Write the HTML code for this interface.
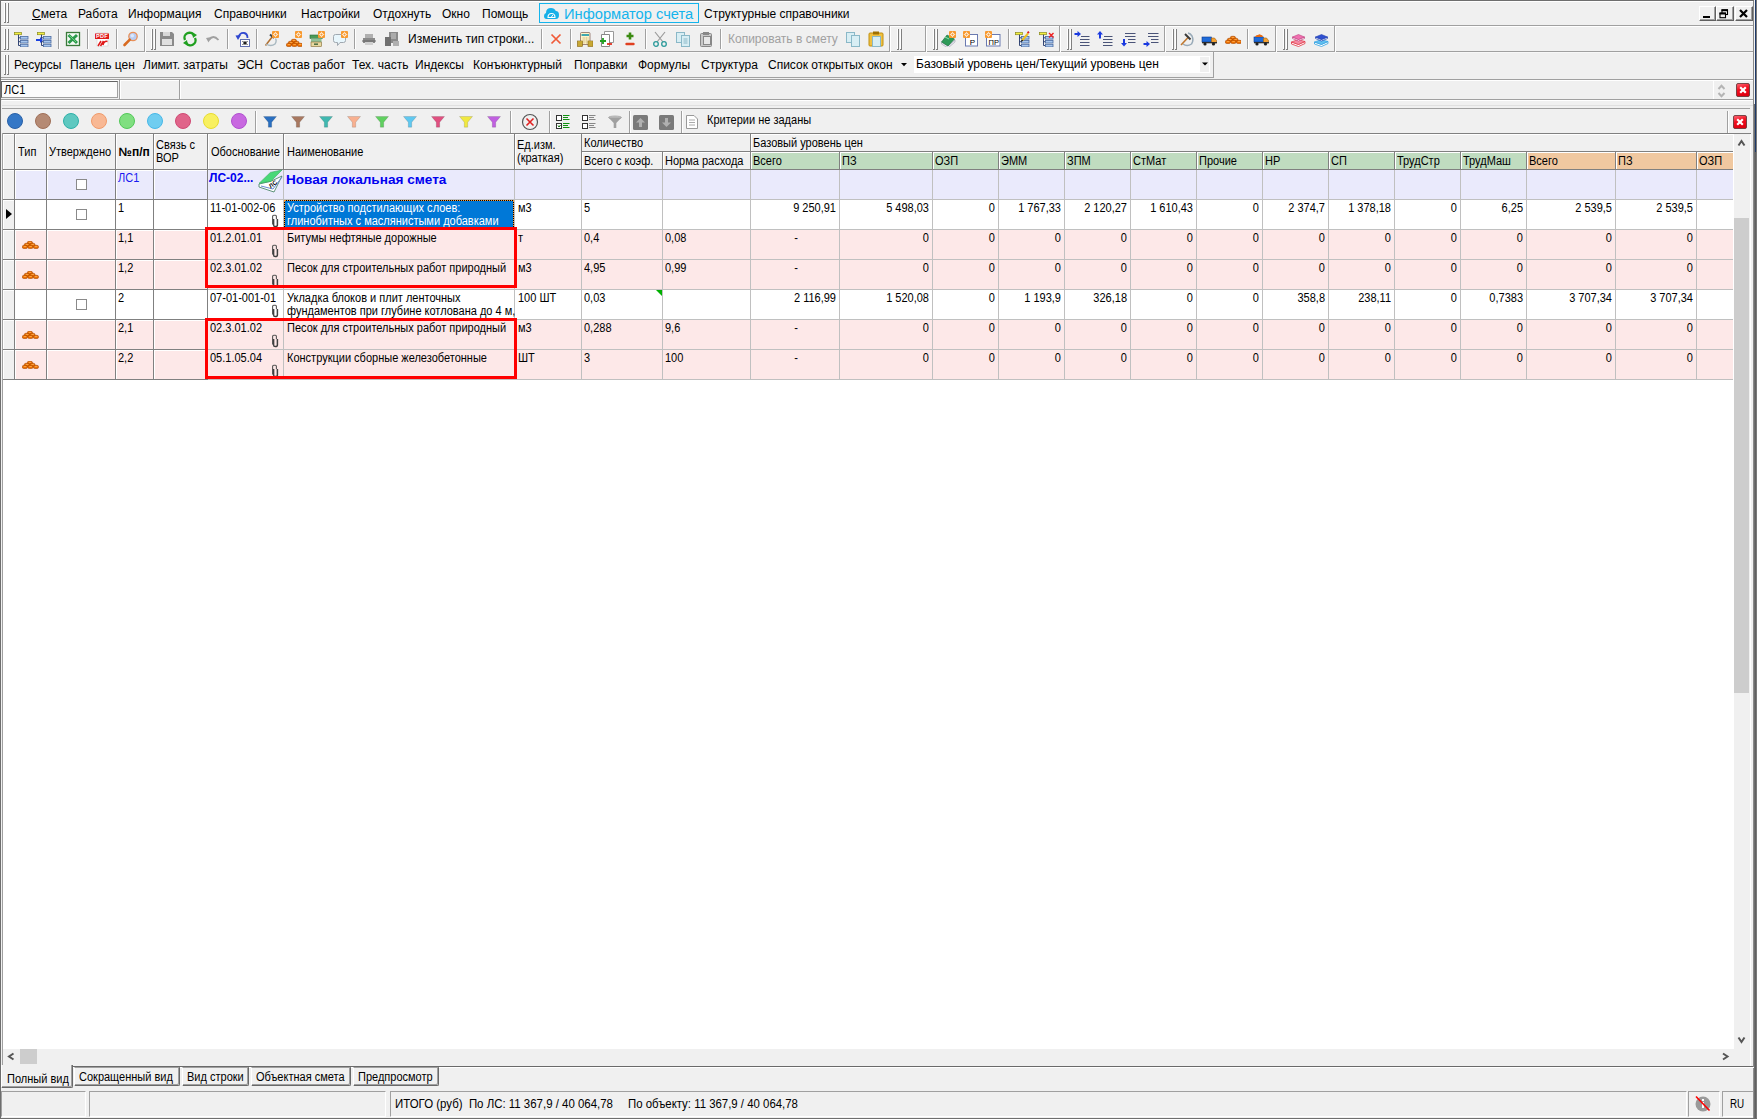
<!DOCTYPE html>
<html><head><meta charset="utf-8"><title>Smeta</title>
<style>
html,body{margin:0;padding:0;}
body{width:1757px;height:1119px;position:relative;overflow:hidden;background:#f0f0f0;font-family:"Liberation Sans",sans-serif;}
body>div,body>svg{position:absolute;white-space:pre;}
</style></head><body>
<div style="left:4px;top:3px;width:1px;height:20px;background:#ffffff;"></div>
<div style="left:5px;top:3px;width:1px;height:20px;background:#808080;"></div>
<div style="left:4px;top:22px;width:2px;height:1px;background:#808080;"></div>
<div style="left:7px;top:3px;width:1px;height:20px;background:#ffffff;"></div>
<div style="left:8px;top:3px;width:1px;height:20px;background:#808080;"></div>
<div style="left:7px;top:22px;width:2px;height:1px;background:#808080;"></div>
<div style="left:32px;top:8.03px;font-size:12px;line-height:12px;color:#000;">Смета</div>
<div style="left:78px;top:8.03px;font-size:12px;line-height:12px;color:#000;">Работа</div>
<div style="left:128px;top:8.03px;font-size:12px;line-height:12px;color:#000;">Информация</div>
<div style="left:214px;top:8.03px;font-size:12px;line-height:12px;color:#000;">Справочники</div>
<div style="left:301px;top:8.03px;font-size:12px;line-height:12px;color:#000;">Настройки</div>
<div style="left:373px;top:8.03px;font-size:12px;line-height:12px;color:#000;">Отдохнуть</div>
<div style="left:442px;top:8.03px;font-size:12px;line-height:12px;color:#000;">Окно</div>
<div style="left:482px;top:8.03px;font-size:12px;line-height:12px;color:#000;">Помощь</div>
<div style="left:32px;top:19px;width:9px;height:1px;background:#000;"></div>
<div style="left:539px;top:3px;width:160px;height:20px;background:transparent;box-sizing:border-box;border:1px solid #14b4ec;"></div>
<svg style="left:543px;top:6px;" width="17" height="14" viewBox="0 0 17 14"><path d="M3.5 13 Q1 13 1 10 Q1 7.5 3 7 Q3 2 8 2 Q11.5 2 12.8 5 Q16 5.2 16 9 Q16 13 13 13 Z" fill="#18b0e8"/><path d="M5 11.5 Q5 7.5 8.5 7.5 Q12 7.5 12 11.5 Z" fill="none" stroke="#fff" stroke-width="1.1"/><path d="M8.5 11 L9.8 9" stroke="#fff" stroke-width="1"/></svg>
<div style="left:564px;top:6.79px;font-size:14.7px;line-height:14.7px;color:#14b4ec;">Информатор счета</div>
<div style="left:704px;top:8.03px;font-size:12px;line-height:12px;color:#000;">Структурные справочники</div>
<div style="left:1699px;top:6px;width:17px;height:15px;background:#f0f0f0;box-sizing:border-box;border-top:1px solid #fff;border-left:1px solid #fff;border-right:1px solid #606060;border-bottom:1px solid #606060;box-shadow:inset -1px -1px 0 #a0a0a0;"></div>
<div style="left:1716px;top:6px;width:18px;height:15px;background:#f0f0f0;box-sizing:border-box;border-top:1px solid #fff;border-left:1px solid #fff;border-right:1px solid #606060;border-bottom:1px solid #606060;box-shadow:inset -1px -1px 0 #a0a0a0;"></div>
<div style="left:1735px;top:6px;width:18px;height:15px;background:#f0f0f0;box-sizing:border-box;border-top:1px solid #fff;border-left:1px solid #fff;border-right:1px solid #606060;border-bottom:1px solid #606060;box-shadow:inset -1px -1px 0 #a0a0a0;"></div>
<div style="left:1703px;top:16px;width:7px;height:2px;background:#000;"></div>
<svg style="left:1718px;top:8px;" width="12" height="11" viewBox="0 0 12 11"><rect x="4" y="2" width="5.5" height="4.5" fill="none" stroke="#000" stroke-width="1.1"/><rect x="3.5" y="1.2" width="6.5" height="2" fill="#000"/><rect x="2" y="5.2" width="5.5" height="4.5" fill="#f0f0f0" stroke="#000" stroke-width="1.1"/><rect x="1.5" y="4.5" width="6.5" height="2" fill="#000"/></svg>
<svg style="left:1738px;top:8px;" width="11" height="11" viewBox="0 0 11 11"><path d="M2 2 L9 9 M9 2 L2 9" stroke="#000" stroke-width="2.2"/></svg>
<div style="left:1px;top:25px;width:1753px;height:1px;background:#a0a0a0;"></div>
<div style="left:1px;top:26px;width:1752px;height:1px;background:#ffffff;"></div>
<div style="left:1px;top:1px;width:1752px;height:1px;background:#ffffff;"></div>
<div style="left:1753px;top:1px;width:1px;height:25px;background:#a0a0a0;"></div>
<div style="left:1px;top:51px;width:1753px;height:1px;background:#a0a0a0;"></div>
<div style="left:1px;top:52px;width:1753px;height:1px;background:#f8f8f8;"></div>
<div style="left:144px;top:26px;width:1px;height:26px;background:#a0a0a0;"></div>
<div style="left:145px;top:26px;width:1px;height:26px;background:#ffffff;"></div>
<div style="left:889px;top:26px;width:1px;height:26px;background:#a0a0a0;"></div>
<div style="left:890px;top:26px;width:1px;height:26px;background:#ffffff;"></div>
<div style="left:925px;top:26px;width:1px;height:26px;background:#a0a0a0;"></div>
<div style="left:926px;top:26px;width:1px;height:26px;background:#ffffff;"></div>
<div style="left:1059px;top:26px;width:1px;height:26px;background:#a0a0a0;"></div>
<div style="left:1060px;top:26px;width:1px;height:26px;background:#ffffff;"></div>
<div style="left:1164px;top:26px;width:1px;height:26px;background:#a0a0a0;"></div>
<div style="left:1165px;top:26px;width:1px;height:26px;background:#ffffff;"></div>
<div style="left:1275px;top:26px;width:1px;height:26px;background:#a0a0a0;"></div>
<div style="left:1276px;top:26px;width:1px;height:26px;background:#ffffff;"></div>
<div style="left:1334px;top:26px;width:1px;height:26px;background:#a0a0a0;"></div>
<div style="left:1335px;top:26px;width:1px;height:26px;background:#ffffff;"></div>
<div style="left:4px;top:29px;width:1px;height:21px;background:#ffffff;"></div>
<div style="left:5px;top:29px;width:1px;height:21px;background:#808080;"></div>
<div style="left:4px;top:49px;width:2px;height:1px;background:#808080;"></div>
<div style="left:7px;top:29px;width:1px;height:21px;background:#ffffff;"></div>
<div style="left:8px;top:29px;width:1px;height:21px;background:#808080;"></div>
<div style="left:7px;top:49px;width:2px;height:1px;background:#808080;"></div>
<div style="left:151px;top:29px;width:1px;height:21px;background:#ffffff;"></div>
<div style="left:152px;top:29px;width:1px;height:21px;background:#808080;"></div>
<div style="left:151px;top:49px;width:2px;height:1px;background:#808080;"></div>
<div style="left:154px;top:29px;width:1px;height:21px;background:#ffffff;"></div>
<div style="left:155px;top:29px;width:1px;height:21px;background:#808080;"></div>
<div style="left:154px;top:49px;width:2px;height:1px;background:#808080;"></div>
<div style="left:897px;top:29px;width:1px;height:21px;background:#ffffff;"></div>
<div style="left:898px;top:29px;width:1px;height:21px;background:#808080;"></div>
<div style="left:897px;top:49px;width:2px;height:1px;background:#808080;"></div>
<div style="left:900px;top:29px;width:1px;height:21px;background:#ffffff;"></div>
<div style="left:901px;top:29px;width:1px;height:21px;background:#808080;"></div>
<div style="left:900px;top:49px;width:2px;height:1px;background:#808080;"></div>
<div style="left:933px;top:29px;width:1px;height:21px;background:#ffffff;"></div>
<div style="left:934px;top:29px;width:1px;height:21px;background:#808080;"></div>
<div style="left:933px;top:49px;width:2px;height:1px;background:#808080;"></div>
<div style="left:936px;top:29px;width:1px;height:21px;background:#ffffff;"></div>
<div style="left:937px;top:29px;width:1px;height:21px;background:#808080;"></div>
<div style="left:936px;top:49px;width:2px;height:1px;background:#808080;"></div>
<div style="left:1067px;top:29px;width:1px;height:21px;background:#ffffff;"></div>
<div style="left:1068px;top:29px;width:1px;height:21px;background:#808080;"></div>
<div style="left:1067px;top:49px;width:2px;height:1px;background:#808080;"></div>
<div style="left:1070px;top:29px;width:1px;height:21px;background:#ffffff;"></div>
<div style="left:1071px;top:29px;width:1px;height:21px;background:#808080;"></div>
<div style="left:1070px;top:49px;width:2px;height:1px;background:#808080;"></div>
<div style="left:1172px;top:29px;width:1px;height:21px;background:#ffffff;"></div>
<div style="left:1173px;top:29px;width:1px;height:21px;background:#808080;"></div>
<div style="left:1172px;top:49px;width:2px;height:1px;background:#808080;"></div>
<div style="left:1175px;top:29px;width:1px;height:21px;background:#ffffff;"></div>
<div style="left:1176px;top:29px;width:1px;height:21px;background:#808080;"></div>
<div style="left:1175px;top:49px;width:2px;height:1px;background:#808080;"></div>
<div style="left:1283px;top:29px;width:1px;height:21px;background:#ffffff;"></div>
<div style="left:1284px;top:29px;width:1px;height:21px;background:#808080;"></div>
<div style="left:1283px;top:49px;width:2px;height:1px;background:#808080;"></div>
<div style="left:1286px;top:29px;width:1px;height:21px;background:#ffffff;"></div>
<div style="left:1287px;top:29px;width:1px;height:21px;background:#808080;"></div>
<div style="left:1286px;top:49px;width:2px;height:1px;background:#808080;"></div>
<div style="left:58px;top:29px;width:1px;height:20px;background:#a0a0a0;"></div>
<div style="left:59px;top:29px;width:1px;height:20px;background:#ffffff;"></div>
<div style="left:87px;top:29px;width:1px;height:20px;background:#a0a0a0;"></div>
<div style="left:88px;top:29px;width:1px;height:20px;background:#ffffff;"></div>
<div style="left:116px;top:29px;width:1px;height:20px;background:#a0a0a0;"></div>
<div style="left:117px;top:29px;width:1px;height:20px;background:#ffffff;"></div>
<div style="left:227px;top:29px;width:1px;height:20px;background:#a0a0a0;"></div>
<div style="left:228px;top:29px;width:1px;height:20px;background:#ffffff;"></div>
<div style="left:256px;top:29px;width:1px;height:20px;background:#a0a0a0;"></div>
<div style="left:257px;top:29px;width:1px;height:20px;background:#ffffff;"></div>
<div style="left:354px;top:29px;width:1px;height:20px;background:#a0a0a0;"></div>
<div style="left:355px;top:29px;width:1px;height:20px;background:#ffffff;"></div>
<div style="left:541px;top:29px;width:1px;height:20px;background:#a0a0a0;"></div>
<div style="left:542px;top:29px;width:1px;height:20px;background:#ffffff;"></div>
<div style="left:570px;top:29px;width:1px;height:20px;background:#a0a0a0;"></div>
<div style="left:571px;top:29px;width:1px;height:20px;background:#ffffff;"></div>
<div style="left:645px;top:29px;width:1px;height:20px;background:#a0a0a0;"></div>
<div style="left:646px;top:29px;width:1px;height:20px;background:#ffffff;"></div>
<div style="left:720px;top:29px;width:1px;height:20px;background:#a0a0a0;"></div>
<div style="left:721px;top:29px;width:1px;height:20px;background:#ffffff;"></div>
<div style="left:1008px;top:29px;width:1px;height:20px;background:#a0a0a0;"></div>
<div style="left:1009px;top:29px;width:1px;height:20px;background:#ffffff;"></div>
<div style="left:1247px;top:29px;width:1px;height:20px;background:#a0a0a0;"></div>
<div style="left:1248px;top:29px;width:1px;height:20px;background:#ffffff;"></div>
<svg style="left:13px;top:31px;" width="16" height="16" viewBox="0 0 16 16"><rect x="1.5" y="1.5" width="7" height="2.2" fill="#f4f040" stroke="#8a8a20" stroke-width="0.7"/><path d="M5.5 3.7 V14.5 M5.5 6.8 H7.5 M5.5 10.7 H7.5 M5.5 14.5 H7.5" stroke="#203468" fill="none" stroke-width="0.9"/><rect x="7.5" y="5.5" width="7.5" height="2.6" fill="#a8c8f0" stroke="#4a6aa0" stroke-width="0.8"/><rect x="7.5" y="9.4" width="7.5" height="2.6" fill="#a8c8f0" stroke="#4a6aa0" stroke-width="0.8"/><rect x="7.5" y="13.3" width="7.5" height="2.6" fill="#a8c8f0" stroke="#4a6aa0" stroke-width="0.8"/></svg>
<svg style="left:36px;top:31px;" width="16" height="16" viewBox="0 0 16 16"><rect x="1.5" y="1.5" width="7" height="2.2" fill="#f4f040" stroke="#8a8a20" stroke-width="0.7"/><path d="M5.5 3.7 V14.5 M5.5 6.8 H7.5 M5.5 10.7 H7.5 M5.5 14.5 H7.5" stroke="#203468" fill="none" stroke-width="0.9"/><rect x="7.5" y="5.5" width="7.5" height="2.6" fill="#a8c8f0" stroke="#4a6aa0" stroke-width="0.8"/><rect x="7.5" y="9.4" width="7.5" height="2.6" fill="#a8c8f0" stroke="#4a6aa0" stroke-width="0.8"/><rect x="7.5" y="13.3" width="7.5" height="2.6" fill="#a8c8f0" stroke="#4a6aa0" stroke-width="0.8"/><path d="M0 9 H5" stroke="#1a40e0" stroke-width="2"/><path d="M4 6 L7 9 L4 12 Z" fill="#1a40e0"/></svg>
<svg style="left:65px;top:31px;" width="16" height="16" viewBox="0 0 16 16"><rect x="1.5" y="1.5" width="13" height="13" fill="#f4faf4" stroke="#3a7a3a" stroke-width="1.3"/><path d="M3.5 4 L12 12 M12 4 L3.5 12" stroke="#2a9a4a" stroke-width="3"/><path d="M4.5 4.5 L11 11" stroke="#70d080" stroke-width="1"/></svg>
<svg style="left:94px;top:31px;" width="16" height="16" viewBox="0 0 16 16"><rect x="3" y="2" width="11" height="13" fill="#fff" stroke="#d0d0d0" stroke-width="0.6"/><rect x="1" y="2.5" width="14" height="5.5" fill="#e01818"/><text x="8" y="7.2" font-size="5.5" font-weight="bold" fill="#fff" text-anchor="middle" font-family="Liberation Sans" letter-spacing="0.3">PDF</text><path d="M4 15 L7 10 M6.5 15 L9.5 10 M9 14 Q10 9.5 13.5 10.5" stroke="#e01818" stroke-width="1.5" fill="none"/></svg>
<svg style="left:122px;top:31px;" width="16" height="16" viewBox="0 0 16 16"><circle cx="11" cy="5.5" r="4.2" fill="#b8cdf4" stroke="#e8905a" stroke-width="1.3"/><circle cx="10.3" cy="4.8" r="1.8" fill="#dce8fc"/><path d="M7.8 8.7 L2.5 14" stroke="#d86a20" stroke-width="2.6" stroke-linecap="round"/></svg>
<svg style="left:159px;top:31px;" width="16" height="16" viewBox="0 0 16 16"><path d="M1 1 H13 L15 3 V15 H1 Z" fill="#8a8a8a"/><rect x="4" y="1" width="7" height="4" fill="#d8d8d8"/><rect x="3" y="8" width="10" height="6" fill="#e0e0e0"/></svg>
<svg style="left:182px;top:31px;" width="16" height="16" viewBox="0 0 16 16"><path d="M3 9 A5 5 0 0 1 12 4.5" stroke="#20a020" stroke-width="2.4" fill="none"/><path d="M13 7 A5 5 0 0 1 4 11.5" stroke="#20a020" stroke-width="2.4" fill="none"/><path d="M10 1 L15 4 L11 7 Z" fill="#20a020"/><path d="M6 15 L1 12 L5 9 Z" fill="#20a020"/></svg>
<svg style="left:205px;top:31px;" width="16" height="16" viewBox="0 0 16 16"><path d="M4 9 Q8 3 13.5 9" stroke="#a0a0a0" stroke-width="1.8" fill="none"/><path d="M1 7 L6.5 6 L3.5 11.5 Z" fill="#a0a0a0"/></svg>
<svg style="left:235px;top:31px;" width="16" height="16" viewBox="0 0 16 16"><path d="M3.5 6 Q5 1.5 9 2 Q12.5 2.5 12.5 7" stroke="#3048d0" stroke-width="1.8" fill="none"/><path d="M0.5 4.5 L6 4 L3 9 Z" fill="#3048d0"/><rect x="5.5" y="8.5" width="9" height="7" fill="#fff" stroke="#6070b0"/><path d="M7.5 10.5 L12.5 13.5 M12.5 10.5 L7.5 13.5 M10 10 V14" stroke="#000" stroke-width="0.9"/></svg>
<svg style="left:263px;top:31px;" width="16" height="16" viewBox="0 0 16 16"><path d="M2.5 14.5 L9.5 5.5" stroke="#b07030" stroke-width="1.5"/><path d="M7 3.5 L11 7" stroke="#404850" stroke-width="2"/><path d="M3 13 Q8 16 12 13 Q14 10 12.5 7.5" stroke="#a8b8c0" stroke-width="1.4" fill="none"/><rect x="9" y="0" width="7" height="7" rx="1" fill="#f89a30"/><circle cx="12.5" cy="3.5" r="1.5" fill="none" stroke="#fff" stroke-width="1"/><path d="M12.5 0.8 V1.6 M12.5 5.4 V6.2 M9.8 3.5 H10.6 M14.4 3.5 H15.2" stroke="#fff" stroke-width="0.8"/></svg>
<svg style="left:286px;top:31px;" width="16" height="16" viewBox="0 0 16 16"><rect x="5.3" y="8.3" width="5.2" height="3.2" rx="1.5" fill="#ee7000" stroke="#a84800" stroke-width="0.6"/><rect x="6.8" y="9.2" width="2.5" height="0.8" fill="#ffb050"/><rect x="2.3" y="10.3" width="5.2" height="3.2" rx="1.5" fill="#ee7000" stroke="#a84800" stroke-width="0.6"/><rect x="3.8" y="11.2" width="2.5" height="0.8" fill="#ffb050"/><rect x="7.8" y="10.3" width="5.2" height="3.2" rx="1.5" fill="#ee7000" stroke="#a84800" stroke-width="0.6"/><rect x="9.3" y="11.2" width="2.5" height="0.8" fill="#ffb050"/><rect x="0.3" y="12.3" width="5.2" height="3.2" rx="1.5" fill="#ee7000" stroke="#a84800" stroke-width="0.6"/><rect x="1.8" y="13.2" width="2.5" height="0.8" fill="#ffb050"/><rect x="5.8" y="12.3" width="5.2" height="3.2" rx="1.5" fill="#ee7000" stroke="#a84800" stroke-width="0.6"/><rect x="7.3" y="13.2" width="2.5" height="0.8" fill="#ffb050"/><rect x="11.3" y="12.3" width="5.2" height="3.2" rx="1.5" fill="#ee7000" stroke="#a84800" stroke-width="0.6"/><rect x="12.8" y="13.2" width="2.5" height="0.8" fill="#ffb050"/><rect x="9" y="0" width="7" height="7" rx="1" fill="#f89a30"/><circle cx="12.5" cy="3.5" r="1.5" fill="none" stroke="#fff" stroke-width="1"/><path d="M12.5 0.8 V1.6 M12.5 5.4 V6.2 M9.8 3.5 H10.6 M14.4 3.5 H15.2" stroke="#fff" stroke-width="0.8"/></svg>
<svg style="left:309px;top:31px;" width="16" height="16" viewBox="0 0 16 16"><rect x="1" y="4" width="12.5" height="3.5" fill="#4a9a58" stroke="#2a6a38" stroke-width="0.6"/><rect x="2" y="7.5" width="10.5" height="3.5" fill="#90c098"/><rect x="2" y="11" width="10.5" height="4.5" fill="#e8d8a0" stroke="#806830" stroke-width="0.6"/><rect x="5" y="12.5" width="4" height="1.3" fill="#305830"/><rect x="9" y="0" width="7" height="7" rx="1" fill="#f89a30"/><circle cx="12.5" cy="3.5" r="1.5" fill="none" stroke="#fff" stroke-width="1"/><path d="M12.5 0.8 V1.6 M12.5 5.4 V6.2 M9.8 3.5 H10.6 M14.4 3.5 H15.2" stroke="#fff" stroke-width="0.8"/></svg>
<svg style="left:332px;top:31px;" width="16" height="16" viewBox="0 0 16 16"><path d="M1.5 5.5 Q1.5 3.5 3.5 3.5 H11.5 Q13.5 3.5 13.5 5.5 V9.5 Q13.5 11.5 11.5 11.5 H8 L5.5 14.5 V11.5 H3.5 Q1.5 11.5 1.5 9.5 Z" fill="#e8f6fc" stroke="#a0a8b0"/><rect x="9" y="0" width="7" height="7" rx="1" fill="#f89a30"/><circle cx="12.5" cy="3.5" r="1.5" fill="none" stroke="#fff" stroke-width="1"/><path d="M12.5 0.8 V1.6 M12.5 5.4 V6.2 M9.8 3.5 H10.6 M14.4 3.5 H15.2" stroke="#fff" stroke-width="0.8"/></svg>
<svg style="left:361px;top:31px;" width="16" height="16" viewBox="0 0 16 16"><path d="M2 7 H14 V12 H2 Z" fill="#8a8a8a"/><path d="M4 3 H12 V7 H4 Z" fill="#b0b0b0"/><path d="M1 10 H15" stroke="#666"/><rect x="4" y="11" width="8" height="3" fill="#d0d0d0"/></svg>
<svg style="left:384px;top:31px;" width="16" height="16" viewBox="0 0 16 16"><rect x="5" y="1" width="9" height="11" fill="#8a8a8a"/><rect x="1" y="6" width="6" height="9" fill="#707070"/><rect x="9" y="10" width="6" height="5" fill="#b0b0b0"/><path d="M7 3 H12 M7 5 H12 M7 7 H12" stroke="#ccc"/></svg>
<svg style="left:548px;top:31px;" width="16" height="16" viewBox="0 0 16 16"><path d="M3.5 3.5 L12.5 12.5 M12.5 3.5 L3.5 12.5" stroke="#f05a38" stroke-width="1.7"/></svg>
<svg style="left:577px;top:31px;" width="16" height="16" viewBox="0 0 16 16"><rect x="3.5" y="1.5" width="9.5" height="12" rx="1" fill="#fff4c8" stroke="#8a6a60" stroke-width="0.8"/><rect x="4.5" y="3" width="7.5" height="2" fill="#40a8b0"/><path d="M5 7 H12 M5 9 H12 M5 11 H12 M7 6 V13 M9.5 6 V13" stroke="#d8c890" stroke-width="0.6"/><rect x="0.5" y="10" width="5" height="5.5" fill="#e0c040" stroke="#806010" stroke-width="0.6"/><rect x="11" y="10" width="5" height="5.5" fill="#e0c040" stroke="#806010" stroke-width="0.6"/><path d="M0.5 12 H5.5 M0.5 14 H5.5 M11 12 H16 M11 14 H16" stroke="#806010" stroke-width="0.5"/></svg>
<svg style="left:599px;top:31px;" width="16" height="16" viewBox="0 0 16 16"><path d="M5.5 0.5 H14.5 V11.5 H5.5 Z" fill="#fff" stroke="#999"/><path d="M2.5 3.5 H10.5 V15.5 H2.5 Z" fill="#fff" stroke="#888"/><path d="M1 10 H7 M4 7 V13" stroke="#20a020" stroke-width="1.8"/><path d="M8 13 H13" stroke="#e03020" stroke-width="1.8"/></svg>
<svg style="left:622px;top:31px;" width="16" height="16" viewBox="0 0 16 16"><path d="M4.5 5 H11.5 M8 1.5 V8.5" stroke="#3a8a10" stroke-width="2.6"/><path d="M4.5 13 H11.5" stroke="#e04020" stroke-width="2.4" stroke-linecap="round"/></svg>
<svg style="left:652px;top:31px;" width="16" height="16" viewBox="0 0 16 16"><path d="M3 1 L11 11 M13 1 L5 11" stroke="#9a9a9a" stroke-width="1.2"/><circle cx="4" cy="13" r="2.3" fill="none" stroke="#2a9a9a" stroke-width="1.3"/><circle cx="12" cy="13" r="2.3" fill="none" stroke="#2a9a9a" stroke-width="1.3"/></svg>
<svg style="left:675px;top:31px;" width="16" height="16" viewBox="0 0 16 16"><rect x="1.5" y="1.5" width="8" height="10" fill="#d8eef4" stroke="#8ab8c8"/><rect x="6.5" y="4.5" width="8" height="11" fill="#d8eef4" stroke="#8ab8c8"/><path d="M8.5 8 H12.5 M8.5 10 H12.5 M8.5 12 H12.5" stroke="#8ab8c8"/></svg>
<svg style="left:698px;top:31px;" width="16" height="16" viewBox="0 0 16 16"><rect x="2.5" y="2.5" width="11" height="13" rx="1" fill="#c8c8c8" stroke="#888"/><rect x="5" y="1" width="6" height="3" fill="#888"/><rect x="5.5" y="5.5" width="7" height="8" fill="#e8e8e8" stroke="#888"/></svg>
<svg style="left:845px;top:31px;" width="16" height="16" viewBox="0 0 16 16"><rect x="1.5" y="1.5" width="8" height="10" fill="#d8eef4" stroke="#8ab8c8"/><rect x="6.5" y="4.5" width="8" height="11" fill="#d8eef4" stroke="#8ab8c8"/></svg>
<svg style="left:868px;top:31px;" width="16" height="16" viewBox="0 0 16 16"><rect x="1" y="2" width="14" height="13" rx="1" fill="#f0c040" stroke="#c09010"/><rect x="5" y="0.5" width="6" height="3" fill="#a07000"/><rect x="4.5" y="5.5" width="8" height="10" fill="#d8eef4" stroke="#8ab8c8"/></svg>
<svg style="left:940px;top:31px;" width="16" height="16" viewBox="0 0 16 16"><path d="M1.5 11 L8 15 L15 9 L15 11 L8 17 L1.5 13 Z" fill="#e8e8f0" stroke="#a0a0b0" stroke-width="0.6"/><path d="M1.5 11 L7 4 L14.5 8 L8 15 Z" fill="#2e9a58" stroke="#1a6a3a" stroke-width="0.6"/><path d="M5 6 L9 8" stroke="#90e0b0" stroke-width="1"/><rect x="9" y="0" width="7" height="7" rx="1" fill="#f89a30"/><circle cx="12.5" cy="3.5" r="1.5" fill="none" stroke="#fff" stroke-width="1"/><path d="M12.5 0.8 V1.6 M12.5 5.4 V6.2 M9.8 3.5 H10.6 M14.4 3.5 H15.2" stroke="#fff" stroke-width="0.8"/></svg>
<svg style="left:963px;top:31px;" width="16" height="16" viewBox="0 0 16 16"><rect x="2.5" y="3.5" width="12" height="11.5" fill="#fff" stroke="#6a7ab0"/><text x="9.5" y="13.5" font-size="8" fill="#000" text-anchor="middle" font-family="Liberation Sans">Р</text><rect x="0" y="0" width="7" height="7" rx="1" fill="#f89a30"/><circle cx="3.5" cy="3.5" r="1.5" fill="none" stroke="#fff" stroke-width="1"/><path d="M3.5 0.8 V1.6 M3.5 5.4 V6.2 M0.8 3.5 H1.6 M5.4 3.5 H6.2" stroke="#fff" stroke-width="0.8"/></svg>
<svg style="left:985px;top:31px;" width="16" height="16" viewBox="0 0 16 16"><rect x="1.5" y="3.5" width="13.5" height="11.5" fill="#fff" stroke="#6a7ab0"/><text x="8.8" y="13.5" font-size="7.5" fill="#000" text-anchor="middle" font-family="Liberation Sans">ПР</text><rect x="0" y="0" width="7" height="7" rx="1" fill="#f89a30"/><circle cx="3.5" cy="3.5" r="1.5" fill="none" stroke="#fff" stroke-width="1"/><path d="M3.5 0.8 V1.6 M3.5 5.4 V6.2 M0.8 3.5 H1.6 M5.4 3.5 H6.2" stroke="#fff" stroke-width="0.8"/></svg>
<svg style="left:1014px;top:31px;" width="16" height="16" viewBox="0 0 16 16"><rect x="1.5" y="1.5" width="7" height="2.2" fill="#f4f040" stroke="#8a8a20" stroke-width="0.7"/><path d="M5.5 3.7 V14.5 M5.5 6.8 H7.5 M5.5 10.7 H7.5 M5.5 14.5 H7.5" stroke="#203468" fill="none" stroke-width="0.9"/><rect x="7.5" y="5.5" width="7.5" height="2.6" fill="#a8c8f0" stroke="#4a6aa0" stroke-width="0.8"/><rect x="7.5" y="9.4" width="7.5" height="2.6" fill="#a8c8f0" stroke="#4a6aa0" stroke-width="0.8"/><rect x="7.5" y="13.3" width="7.5" height="2.6" fill="#a8c8f0" stroke="#4a6aa0" stroke-width="0.8"/><path d="M8 9.5 L14 2.5" stroke="#f0c020" stroke-width="2"/><path d="M13.5 2 L15 0.8" stroke="#e02020" stroke-width="2"/><path d="M7.5 10.5 L8.5 9" stroke="#000" stroke-width="1.2"/></svg>
<svg style="left:1038px;top:31px;" width="16" height="16" viewBox="0 0 16 16"><rect x="1.5" y="1.5" width="7" height="2.2" fill="#f4f040" stroke="#8a8a20" stroke-width="0.7"/><path d="M5.5 3.7 V14.5 M5.5 6.8 H7.5 M5.5 10.7 H7.5 M5.5 14.5 H7.5" stroke="#203468" fill="none" stroke-width="0.9"/><rect x="7.5" y="5.5" width="7.5" height="2.6" fill="#a8c8f0" stroke="#4a6aa0" stroke-width="0.8"/><rect x="7.5" y="9.4" width="7.5" height="2.6" fill="#a8c8f0" stroke="#4a6aa0" stroke-width="0.8"/><rect x="7.5" y="13.3" width="7.5" height="2.6" fill="#a8c8f0" stroke="#4a6aa0" stroke-width="0.8"/><path d="M11 2 L15.5 6.5 M15.5 2 L11 6.5" stroke="#f02020" stroke-width="1.4"/></svg>
<svg style="left:1074px;top:31px;" width="16" height="16" viewBox="0 0 16 16"><path d="M7 5.5 H15.5 M6 8.5 H15.5 M6 11.5 H15.5 M6 14.5 H15.5" stroke="#4a5478" stroke-width="1"/><path d="M0.5 3 H4" stroke="#1a3ae0" stroke-width="2"/><path d="M3.5 0 L7 3 L3.5 6 Z" fill="#1a3ae0"/></svg>
<svg style="left:1097px;top:31px;" width="16" height="16" viewBox="0 0 16 16"><path d="M7 5.5 H15.5 M6 8.5 H15.5 M6 11.5 H15.5 M6 14.5 H15.5" stroke="#4a5478" stroke-width="1"/><path d="M3 3 V7.5" stroke="#1a3ae0" stroke-width="2"/><path d="M0 3.5 L3 0 L6 3.5 Z" fill="#1a3ae0"/></svg>
<svg style="left:1120px;top:31px;" width="16" height="16" viewBox="0 0 16 16"><path d="M5 2.5 H15.5 M5 5.5 H15.5 M8 8.5 H15.5 M8 11.5 H15.5" stroke="#4a5478" stroke-width="1"/><path d="M4 8 V12.5" stroke="#1a3ae0" stroke-width="2"/><path d="M1 12 L4 15.5 L7 12 Z" fill="#1a3ae0"/></svg>
<svg style="left:1143px;top:31px;" width="16" height="16" viewBox="0 0 16 16"><path d="M5 2.5 H15.5 M5 5.5 H15.5 M8 8.5 H15.5 M8 11.5 H15.5" stroke="#4a5478" stroke-width="1"/><path d="M0.5 13 H4" stroke="#1a3ae0" stroke-width="2"/><path d="M3.5 10 L7 13 L3.5 16 Z" fill="#1a3ae0"/></svg>
<svg style="left:1179px;top:31px;" width="16" height="16" viewBox="0 0 16 16"><path d="M4 13 Q8 16 12.5 13 Q15 9.5 13 5 Q11.5 2.5 9 2" stroke="#98aab8" stroke-width="1.5" fill="none"/><path d="M2 14 L9.5 6" stroke="#c07830" stroke-width="1.6"/><path d="M6 3 L11.5 8.5" stroke="#3a3a3a" stroke-width="2"/></svg>
<svg style="left:1201px;top:31px;" width="16" height="16" viewBox="0 0 16 16"><rect x="1" y="6" width="9.5" height="5" fill="#1e6ad8" stroke="#0a3a90" stroke-width="0.6"/><path d="M10.5 7 H13.5 L15.5 9.5 V12 H10.5 Z" fill="#f4a030" stroke="#a06010" stroke-width="0.6"/><rect x="1" y="11" width="15" height="1.3" fill="#303030"/><circle cx="4" cy="13" r="1.6" fill="#202020"/><circle cx="12.5" cy="13" r="1.6" fill="#202020"/></svg>
<svg style="left:1225px;top:31px;" width="16" height="16" viewBox="0 0 16 16"><rect x="5.3" y="5.3" width="5.2" height="3.2" rx="1.5" fill="#ee7000" stroke="#a84800" stroke-width="0.6"/><rect x="6.8" y="6.2" width="2.5" height="0.8" fill="#ffb050"/><rect x="2.3" y="7.3" width="5.2" height="3.2" rx="1.5" fill="#ee7000" stroke="#a84800" stroke-width="0.6"/><rect x="3.8" y="8.2" width="2.5" height="0.8" fill="#ffb050"/><rect x="7.8" y="7.3" width="5.2" height="3.2" rx="1.5" fill="#ee7000" stroke="#a84800" stroke-width="0.6"/><rect x="9.3" y="8.2" width="2.5" height="0.8" fill="#ffb050"/><rect x="0.3" y="9.3" width="5.2" height="3.2" rx="1.5" fill="#ee7000" stroke="#a84800" stroke-width="0.6"/><rect x="1.8" y="10.2" width="2.5" height="0.8" fill="#ffb050"/><rect x="5.8" y="9.3" width="5.2" height="3.2" rx="1.5" fill="#ee7000" stroke="#a84800" stroke-width="0.6"/><rect x="7.3" y="10.2" width="2.5" height="0.8" fill="#ffb050"/><rect x="11.3" y="9.3" width="5.2" height="3.2" rx="1.5" fill="#ee7000" stroke="#a84800" stroke-width="0.6"/><rect x="12.8" y="10.2" width="2.5" height="0.8" fill="#ffb050"/></svg>
<svg style="left:1253px;top:31px;" width="16" height="16" viewBox="0 0 16 16"><rect x="1" y="6" width="9.5" height="5" fill="#1e6ad8" stroke="#0a3a90" stroke-width="0.6"/><path d="M10.5 7 H13.5 L15.5 9.5 V12 H10.5 Z" fill="#f4a030" stroke="#a06010" stroke-width="0.6"/><path d="M2 6 Q3 3.5 5 4 Q6.5 2.5 8 4 Q9.5 3.5 10 6 Z" fill="#e86a10"/><rect x="1" y="11" width="15" height="1.3" fill="#303030"/><circle cx="4" cy="13" r="1.6" fill="#202020"/><circle cx="12.5" cy="13" r="1.6" fill="#202020"/></svg>
<svg style="left:1290px;top:31px;" width="16" height="16" viewBox="0 0 16 16"><path d="M1.5 11 L8.5 13.5 L15 10.5 L15 12.5 L8.5 15.5 L1.5 13 Z" fill="#fff" stroke="#e03040" stroke-width="0.8"/><path d="M1.5 11 L8 8.5 L15 10.5 L8.5 13.5 Z" fill="#f48aa0" stroke="#e03040" stroke-width="0.6"/><path d="M2.5 6 L8.5 8.5 L14.5 6 L14.5 7.5 L8.5 10 L2.5 7.5 Z" fill="#fff" stroke="#c04080" stroke-width="0.7"/><path d="M2.5 6 L8.5 3.5 L14.5 6 L8.5 8.5 Z" fill="#f070b0" stroke="#c04080" stroke-width="0.6"/></svg>
<svg style="left:1313px;top:31px;" width="16" height="16" viewBox="0 0 16 16"><path d="M1.5 11 L8.5 13.5 L15 10.5 L15 12.5 L8.5 15.5 L1.5 13 Z" fill="#fff" stroke="#30a0e0" stroke-width="0.8"/><path d="M1.5 11 L8 8.5 L15 10.5 L8.5 13.5 Z" fill="#60c0f0" stroke="#30a0e0" stroke-width="0.6"/><path d="M2.5 6 L8.5 8.5 L14.5 6 L14.5 7.5 L8.5 10 L2.5 7.5 Z" fill="#fff" stroke="#2040b0" stroke-width="0.7"/><path d="M2.5 6 L8.5 3.5 L14.5 6 L8.5 8.5 Z" fill="#3050d0" stroke="#2040b0" stroke-width="0.6"/></svg>
<div style="left:408px;top:33.03px;font-size:12px;line-height:12px;color:#000;">Изменить тип строки...</div>
<div style="left:728px;top:33.03px;font-size:12px;line-height:12px;color:#a0a0a0;">Копировать в смету</div>
<div style="left:4px;top:55px;width:1px;height:20px;background:#ffffff;"></div>
<div style="left:5px;top:55px;width:1px;height:20px;background:#808080;"></div>
<div style="left:4px;top:74px;width:2px;height:1px;background:#808080;"></div>
<div style="left:7px;top:55px;width:1px;height:20px;background:#ffffff;"></div>
<div style="left:8px;top:55px;width:1px;height:20px;background:#808080;"></div>
<div style="left:7px;top:74px;width:2px;height:1px;background:#808080;"></div>
<div style="left:14px;top:59.03px;font-size:12px;line-height:12px;color:#000;">Ресурсы</div>
<div style="left:70px;top:59.03px;font-size:12px;line-height:12px;color:#000;">Панель цен</div>
<div style="left:143px;top:59.03px;font-size:12px;line-height:12px;color:#000;">Лимит. затраты</div>
<div style="left:237px;top:59.03px;font-size:12px;line-height:12px;color:#000;">ЭСН</div>
<div style="left:270px;top:59.03px;font-size:12px;line-height:12px;color:#000;">Состав работ</div>
<div style="left:352px;top:59.03px;font-size:12px;line-height:12px;color:#000;">Тех. часть</div>
<div style="left:415px;top:59.03px;font-size:12px;line-height:12px;color:#000;">Индексы</div>
<div style="left:473px;top:59.03px;font-size:12px;line-height:12px;color:#000;">Конъюнктурный</div>
<div style="left:574px;top:59.03px;font-size:12px;line-height:12px;color:#000;">Поправки</div>
<div style="left:638px;top:59.03px;font-size:12px;line-height:12px;color:#000;">Формулы</div>
<div style="left:701px;top:59.03px;font-size:12px;line-height:12px;color:#000;">Структура</div>
<div style="left:768px;top:59.03px;font-size:12px;line-height:12px;color:#000;">Список открытых окон</div>
<svg style="left:901px;top:63px;" width="6" height="4" viewBox="0 0 6 4"><path d="M0 0 H6 L3 3.2 Z" fill="#000"/></svg>
<div style="left:1213px;top:52px;width:1px;height:25px;background:#a0a0a0;"></div>
<div style="left:914px;top:56px;width:296px;height:17px;background:#ffffff;"></div>
<div style="left:916px;top:58.03px;font-size:12px;line-height:12px;color:#000;">Базовый уровень цен/Текущий уровень цен</div>
<div style="left:1200px;top:57px;width:9px;height:15px;background:#f0f0f0;"></div>
<svg style="left:1202px;top:62px;" width="6" height="4" viewBox="0 0 6 4"><path d="M0 0.5 H6 L3 3.5 Z" fill="#000"/></svg>
<div style="left:1px;top:77px;width:1213px;height:1px;background:#a0a0a0;"></div>
<div style="left:1px;top:79px;width:1753px;height:1px;background:#a0a0a0;"></div>
<div style="left:1px;top:80px;width:1753px;height:1px;background:#ffffff;"></div>
<div style="left:1px;top:81px;width:117px;height:17px;background:#fbfbfb;box-sizing:border-box;border:1px solid #646464;border-right-color:#a0a0a0;border-bottom-color:#a0a0a0;"></div>
<div style="left:4px;top:84.03px;font-size:12px;line-height:12px;color:#000;transform:scaleX(0.917);transform-origin:left center;">ЛС1</div>
<div style="left:119px;top:80px;width:1px;height:19px;background:#a0a0a0;"></div>
<div style="left:120px;top:80px;width:1px;height:19px;background:#ffffff;"></div>
<div style="left:179px;top:80px;width:1px;height:19px;background:#a0a0a0;"></div>
<div style="left:180px;top:80px;width:1px;height:19px;background:#ffffff;"></div>
<div style="left:1713px;top:81px;width:1px;height:18px;background:#ffffff;"></div>
<svg style="left:1716px;top:82px;" width="11" height="17" viewBox="0 0 11 17"><path d="M2.5 7 L5.5 3.8 L8.5 7 M2.5 11 L5.5 14.2 L8.5 11" fill="none" stroke="#b4b4b4" stroke-width="2"/></svg>
<svg style="left:1736px;top:83px;" width="14" height="14" viewBox="0 0 14 14"><defs><linearGradient id="rg" x1="0" y1="0" x2="0.3" y2="1"><stop offset="0" stop-color="#ff6a78"/><stop offset="0.5" stop-color="#f01020"/><stop offset="1" stop-color="#e00010"/></linearGradient></defs><rect x="0.5" y="0.5" width="13" height="13" rx="1.5" fill="url(#rg)" stroke="#5a3030" stroke-width="0.8"/><path d="M4.2 4.2 L9.8 9.8 M9.8 4.2 L4.2 9.8" stroke="#fff" stroke-width="2.2"/></svg>
<div style="left:1px;top:99px;width:1753px;height:1px;background:#a0a0a0;"></div>
<div style="left:1px;top:100px;width:1754px;height:1px;background:#ffffff;"></div>
<div style="left:1px;top:105px;width:1752px;height:1px;background:#e0e0e0;"></div>
<div style="left:2px;top:108px;width:1748px;height:1px;background:#a0a0a0;"></div>
<svg style="left:6px;top:112px;" width="18" height="18" viewBox="0 0 18 18"><circle cx="9" cy="9" r="7.5" fill="#3477c6" stroke="#2a62a8" stroke-width="1"/></svg>
<svg style="left:34px;top:112px;" width="18" height="18" viewBox="0 0 18 18"><circle cx="9" cy="9" r="7.5" fill="#b58a74" stroke="#a07058" stroke-width="1"/></svg>
<svg style="left:62px;top:112px;" width="18" height="18" viewBox="0 0 18 18"><circle cx="9" cy="9" r="7.5" fill="#5ec8c0" stroke="#2eb0a8" stroke-width="1"/></svg>
<svg style="left:90px;top:112px;" width="18" height="18" viewBox="0 0 18 18"><circle cx="9" cy="9" r="7.5" fill="#f8b894" stroke="#f09a6a" stroke-width="1"/></svg>
<svg style="left:118px;top:112px;" width="18" height="18" viewBox="0 0 18 18"><circle cx="9" cy="9" r="7.5" fill="#80df80" stroke="#52c858" stroke-width="1"/></svg>
<svg style="left:146px;top:112px;" width="18" height="18" viewBox="0 0 18 18"><circle cx="9" cy="9" r="7.5" fill="#70cdf0" stroke="#48b8e8" stroke-width="1"/></svg>
<svg style="left:174px;top:112px;" width="18" height="18" viewBox="0 0 18 18"><circle cx="9" cy="9" r="7.5" fill="#e0648a" stroke="#d04a74" stroke-width="1"/></svg>
<svg style="left:202px;top:112px;" width="18" height="18" viewBox="0 0 18 18"><circle cx="9" cy="9" r="7.5" fill="#f8f060" stroke="#e8dc30" stroke-width="1"/></svg>
<svg style="left:230px;top:112px;" width="18" height="18" viewBox="0 0 18 18"><circle cx="9" cy="9" r="7.5" fill="#c868e0" stroke="#b050d0" stroke-width="1"/></svg>
<div style="left:255px;top:111px;width:1px;height:22px;background:#a0a0a0;"></div>
<div style="left:256px;top:111px;width:1px;height:22px;background:#ffffff;"></div>
<svg style="left:262px;top:113px;" width="16" height="16" viewBox="0 0 16 16"><path d="M1.5 3.5 H14.5 L9.7 9.3 V14.2 H6.3 V9.3 Z" fill="#2a6fc0" stroke="rgba(0,0,0,0.18)" stroke-width="0.7"/></svg>
<svg style="left:290px;top:113px;" width="16" height="16" viewBox="0 0 16 16"><path d="M1.5 3.5 H14.5 L9.7 9.3 V14.2 H6.3 V9.3 Z" fill="#a87860" stroke="rgba(0,0,0,0.18)" stroke-width="0.7"/></svg>
<svg style="left:318px;top:113px;" width="16" height="16" viewBox="0 0 16 16"><path d="M1.5 3.5 H14.5 L9.7 9.3 V14.2 H6.3 V9.3 Z" fill="#40b8b0" stroke="rgba(0,0,0,0.18)" stroke-width="0.7"/></svg>
<svg style="left:346px;top:113px;" width="16" height="16" viewBox="0 0 16 16"><path d="M1.5 3.5 H14.5 L9.7 9.3 V14.2 H6.3 V9.3 Z" fill="#f8b090" stroke="rgba(0,0,0,0.18)" stroke-width="0.7"/></svg>
<svg style="left:374px;top:113px;" width="16" height="16" viewBox="0 0 16 16"><path d="M1.5 3.5 H14.5 L9.7 9.3 V14.2 H6.3 V9.3 Z" fill="#60d060" stroke="rgba(0,0,0,0.18)" stroke-width="0.7"/></svg>
<svg style="left:402px;top:113px;" width="16" height="16" viewBox="0 0 16 16"><path d="M1.5 3.5 H14.5 L9.7 9.3 V14.2 H6.3 V9.3 Z" fill="#60c8f0" stroke="rgba(0,0,0,0.18)" stroke-width="0.7"/></svg>
<svg style="left:430px;top:113px;" width="16" height="16" viewBox="0 0 16 16"><path d="M1.5 3.5 H14.5 L9.7 9.3 V14.2 H6.3 V9.3 Z" fill="#e05080" stroke="rgba(0,0,0,0.18)" stroke-width="0.7"/></svg>
<svg style="left:458px;top:113px;" width="16" height="16" viewBox="0 0 16 16"><path d="M1.5 3.5 H14.5 L9.7 9.3 V14.2 H6.3 V9.3 Z" fill="#f0e840" stroke="rgba(0,0,0,0.18)" stroke-width="0.7"/></svg>
<svg style="left:486px;top:113px;" width="16" height="16" viewBox="0 0 16 16"><path d="M1.5 3.5 H14.5 L9.7 9.3 V14.2 H6.3 V9.3 Z" fill="#c060e0" stroke="rgba(0,0,0,0.18)" stroke-width="0.7"/></svg>
<div style="left:510px;top:111px;width:1px;height:22px;background:#a0a0a0;"></div>
<div style="left:511px;top:111px;width:1px;height:22px;background:#ffffff;"></div>
<svg style="left:521px;top:113px;" width="18" height="18" viewBox="0 0 18 18"><circle cx="9" cy="9" r="7.5" fill="none" stroke="#555" stroke-width="1.2"/><path d="M5.5 5.5 L12.5 12.5 M12.5 5.5 L5.5 12.5" stroke="#e02020" stroke-width="1.6"/></svg>
<div style="left:549px;top:111px;width:1px;height:22px;background:#a0a0a0;"></div>
<div style="left:550px;top:111px;width:1px;height:22px;background:#ffffff;"></div>
<svg style="left:555px;top:114px;" width="16" height="16" viewBox="0 0 16 16"><rect x="1.5" y="1.5" width="5" height="5" fill="#fff" stroke="#333"/><rect x="1.5" y="9.5" width="5" height="5" fill="#fff" stroke="#333"/><path d="M3 11.5 L4 13 L5.5 11" stroke="#060" fill="none"/><path d="M8 1.5 H14.5 M8 3.5 H13 M8 5.5 H14.5 M8 9.5 H14.5 M8 11.5 H13 M8 13.5 H14.5" stroke="#109010" stroke-width="1"/></svg>
<svg style="left:581px;top:114px;" width="16" height="16" viewBox="0 0 16 16"><rect x="1.5" y="1.5" width="5" height="5" fill="#fff" stroke="#333"/><rect x="1.5" y="9.5" width="5" height="5" fill="#fff" stroke="#333"/><path d="M8 1.5 H14.5 M8 3.5 H13 M8 5.5 H14.5 M8 9.5 H14.5 M8 11.5 H13 M8 13.5 H14.5" stroke="#888" stroke-width="1"/></svg>
<svg style="left:607px;top:114px;" width="16" height="16" viewBox="0 0 16 16"><ellipse cx="8" cy="3.5" rx="6.5" ry="1.5" fill="#c8c8c8" stroke="#909090" stroke-width="0.6"/><path d="M1.5 3.5 H14.5 L9.3 9 V14 H6.7 V9 Z" fill="#a0a0a0"/></svg>
<div style="left:629px;top:111px;width:1px;height:22px;background:#a0a0a0;"></div>
<div style="left:630px;top:111px;width:1px;height:22px;background:#ffffff;"></div>
<svg style="left:633px;top:115px;" width="15" height="15" viewBox="0 0 15 15"><rect x="0" y="0" width="15" height="15" rx="1.5" fill="#7a7a7a"/><path d="M7.5 3 L12 7.5 H9 V12 H6 V7.5 H3 Z" fill="#b0b0b0"/></svg>
<svg style="left:659px;top:115px;" width="15" height="15" viewBox="0 0 15 15"><rect x="0" y="0" width="15" height="15" rx="1.5" fill="#7a7a7a"/><path d="M7.5 12 L12 7.5 H9 V3 H6 V7.5 H3 Z" fill="#b0b0b0"/></svg>
<div style="left:681px;top:111px;width:1px;height:22px;background:#a0a0a0;"></div>
<div style="left:682px;top:111px;width:1px;height:22px;background:#ffffff;"></div>
<svg style="left:685px;top:114px;" width="14" height="16" viewBox="0 0 14 16"><path d="M1.5 1.5 H9 L12.5 5 V14.5 H1.5 Z" fill="#fff" stroke="#999"/><path d="M4 6 H10 M4 8.5 H10 M4 11 H10" stroke="#aaa"/></svg>
<div style="left:707px;top:114.03px;font-size:12px;line-height:12px;color:#000;transform:scaleX(0.917);transform-origin:left center;">Критерии не заданы</div>
<div style="left:1727px;top:111px;width:1px;height:22px;background:#a0a0a0;"></div>
<div style="left:1728px;top:111px;width:1px;height:22px;background:#ffffff;"></div>
<svg style="left:1733px;top:115px;" width="14" height="14" viewBox="0 0 14 14"><defs><linearGradient id="rg" x1="0" y1="0" x2="0.3" y2="1"><stop offset="0" stop-color="#ff6a78"/><stop offset="0.5" stop-color="#f01020"/><stop offset="1" stop-color="#e00010"/></linearGradient></defs><rect x="0.5" y="0.5" width="13" height="13" rx="1.5" fill="url(#rg)" stroke="#5a3030" stroke-width="0.8"/><path d="M4.2 4.2 L9.8 9.8 M9.8 4.2 L4.2 9.8" stroke="#fff" stroke-width="2.2"/></svg>
<div style="left:2px;top:133px;width:1749px;height:1px;background:#808080;"></div>
<div style="left:3px;top:134px;width:1730px;height:915px;background:#ffffff;"></div>
<div style="left:2px;top:133px;width:1px;height:932px;background:#a0a0a0;"></div>
<div style="left:1px;top:100px;width:1px;height:967px;background:#f0f0f0;"></div>
<div style="left:3px;top:134px;width:1730px;height:36px;background:#f0f0f0;"></div>
<div style="left:3px;top:134px;width:1730px;height:1px;background:#ffffff;"></div>
<div style="left:3px;top:169px;width:1730px;height:1px;background:#808080;"></div>
<div style="left:3px;top:134px;width:1px;height:35px;background:#ffffff;"></div>
<div style="left:14px;top:134px;width:1px;height:36px;background:#808080;"></div>
<div style="left:15px;top:134px;width:1px;height:35px;background:#ffffff;"></div>
<div style="left:46px;top:134px;width:1px;height:36px;background:#808080;"></div>
<div style="left:47px;top:134px;width:1px;height:35px;background:#ffffff;"></div>
<div style="left:115px;top:134px;width:1px;height:36px;background:#808080;"></div>
<div style="left:116px;top:134px;width:1px;height:35px;background:#ffffff;"></div>
<div style="left:153px;top:134px;width:1px;height:36px;background:#808080;"></div>
<div style="left:154px;top:134px;width:1px;height:35px;background:#ffffff;"></div>
<div style="left:207px;top:134px;width:1px;height:36px;background:#808080;"></div>
<div style="left:208px;top:134px;width:1px;height:35px;background:#ffffff;"></div>
<div style="left:283px;top:134px;width:1px;height:36px;background:#808080;"></div>
<div style="left:284px;top:134px;width:1px;height:35px;background:#ffffff;"></div>
<div style="left:514px;top:134px;width:1px;height:36px;background:#808080;"></div>
<div style="left:515px;top:134px;width:1px;height:35px;background:#ffffff;"></div>
<div style="left:581px;top:134px;width:1px;height:36px;background:#808080;"></div>
<div style="left:582px;top:151px;width:1151px;height:1px;background:#808080;"></div>
<div style="left:750px;top:134px;width:1px;height:36px;background:#808080;"></div>
<div style="left:751px;top:134px;width:1px;height:17px;background:#ffffff;"></div>
<div style="left:582px;top:152px;width:80px;height:1px;background:#ffffff;"></div>
<div style="left:582px;top:152px;width:1px;height:17px;background:#ffffff;"></div>
<div style="left:662px;top:151px;width:1px;height:19px;background:#808080;"></div>
<div style="left:584px;top:155.03px;font-size:12px;line-height:12px;color:#000;transform:scaleX(0.917);transform-origin:left center;">Всего с коэф.</div>
<div style="left:663px;top:152px;width:87px;height:1px;background:#ffffff;"></div>
<div style="left:663px;top:152px;width:1px;height:17px;background:#ffffff;"></div>
<div style="left:750px;top:151px;width:1px;height:19px;background:#808080;"></div>
<div style="left:665px;top:155.03px;font-size:12px;line-height:12px;color:#000;transform:scaleX(0.917);transform-origin:left center;">Норма расхода</div>
<div style="left:752px;top:153px;width:87px;height:16px;background:#c0dcc0;"></div>
<div style="left:751px;top:152px;width:88px;height:1px;background:#ffffff;"></div>
<div style="left:751px;top:152px;width:1px;height:17px;background:#ffffff;"></div>
<div style="left:839px;top:151px;width:1px;height:19px;background:#808080;"></div>
<div style="left:753px;top:155.03px;font-size:12px;line-height:12px;color:#000;transform:scaleX(0.917);transform-origin:left center;">Всего</div>
<div style="left:841px;top:153px;width:91px;height:16px;background:#c0dcc0;"></div>
<div style="left:840px;top:152px;width:92px;height:1px;background:#ffffff;"></div>
<div style="left:840px;top:152px;width:1px;height:17px;background:#ffffff;"></div>
<div style="left:932px;top:151px;width:1px;height:19px;background:#808080;"></div>
<div style="left:842px;top:155.03px;font-size:12px;line-height:12px;color:#000;transform:scaleX(0.917);transform-origin:left center;">ПЗ</div>
<div style="left:934px;top:153px;width:64px;height:16px;background:#c0dcc0;"></div>
<div style="left:933px;top:152px;width:65px;height:1px;background:#ffffff;"></div>
<div style="left:933px;top:152px;width:1px;height:17px;background:#ffffff;"></div>
<div style="left:998px;top:151px;width:1px;height:19px;background:#808080;"></div>
<div style="left:935px;top:155.03px;font-size:12px;line-height:12px;color:#000;transform:scaleX(0.917);transform-origin:left center;">ОЗП</div>
<div style="left:1000px;top:153px;width:64px;height:16px;background:#c0dcc0;"></div>
<div style="left:999px;top:152px;width:65px;height:1px;background:#ffffff;"></div>
<div style="left:999px;top:152px;width:1px;height:17px;background:#ffffff;"></div>
<div style="left:1064px;top:151px;width:1px;height:19px;background:#808080;"></div>
<div style="left:1001px;top:155.03px;font-size:12px;line-height:12px;color:#000;transform:scaleX(0.917);transform-origin:left center;">ЭММ</div>
<div style="left:1066px;top:153px;width:64px;height:16px;background:#c0dcc0;"></div>
<div style="left:1065px;top:152px;width:65px;height:1px;background:#ffffff;"></div>
<div style="left:1065px;top:152px;width:1px;height:17px;background:#ffffff;"></div>
<div style="left:1130px;top:151px;width:1px;height:19px;background:#808080;"></div>
<div style="left:1067px;top:155.03px;font-size:12px;line-height:12px;color:#000;transform:scaleX(0.917);transform-origin:left center;">ЗПМ</div>
<div style="left:1132px;top:153px;width:64px;height:16px;background:#c0dcc0;"></div>
<div style="left:1131px;top:152px;width:65px;height:1px;background:#ffffff;"></div>
<div style="left:1131px;top:152px;width:1px;height:17px;background:#ffffff;"></div>
<div style="left:1196px;top:151px;width:1px;height:19px;background:#808080;"></div>
<div style="left:1133px;top:155.03px;font-size:12px;line-height:12px;color:#000;transform:scaleX(0.917);transform-origin:left center;">СтМат</div>
<div style="left:1198px;top:153px;width:64px;height:16px;background:#c0dcc0;"></div>
<div style="left:1197px;top:152px;width:65px;height:1px;background:#ffffff;"></div>
<div style="left:1197px;top:152px;width:1px;height:17px;background:#ffffff;"></div>
<div style="left:1262px;top:151px;width:1px;height:19px;background:#808080;"></div>
<div style="left:1199px;top:155.03px;font-size:12px;line-height:12px;color:#000;transform:scaleX(0.917);transform-origin:left center;">Прочие</div>
<div style="left:1264px;top:153px;width:64px;height:16px;background:#c0dcc0;"></div>
<div style="left:1263px;top:152px;width:65px;height:1px;background:#ffffff;"></div>
<div style="left:1263px;top:152px;width:1px;height:17px;background:#ffffff;"></div>
<div style="left:1328px;top:151px;width:1px;height:19px;background:#808080;"></div>
<div style="left:1265px;top:155.03px;font-size:12px;line-height:12px;color:#000;transform:scaleX(0.917);transform-origin:left center;">НР</div>
<div style="left:1330px;top:153px;width:64px;height:16px;background:#c0dcc0;"></div>
<div style="left:1329px;top:152px;width:65px;height:1px;background:#ffffff;"></div>
<div style="left:1329px;top:152px;width:1px;height:17px;background:#ffffff;"></div>
<div style="left:1394px;top:151px;width:1px;height:19px;background:#808080;"></div>
<div style="left:1331px;top:155.03px;font-size:12px;line-height:12px;color:#000;transform:scaleX(0.917);transform-origin:left center;">СП</div>
<div style="left:1396px;top:153px;width:64px;height:16px;background:#c0dcc0;"></div>
<div style="left:1395px;top:152px;width:65px;height:1px;background:#ffffff;"></div>
<div style="left:1395px;top:152px;width:1px;height:17px;background:#ffffff;"></div>
<div style="left:1460px;top:151px;width:1px;height:19px;background:#808080;"></div>
<div style="left:1397px;top:155.03px;font-size:12px;line-height:12px;color:#000;transform:scaleX(0.917);transform-origin:left center;">ТрудСтр</div>
<div style="left:1462px;top:153px;width:64px;height:16px;background:#c0dcc0;"></div>
<div style="left:1461px;top:152px;width:65px;height:1px;background:#ffffff;"></div>
<div style="left:1461px;top:152px;width:1px;height:17px;background:#ffffff;"></div>
<div style="left:1526px;top:151px;width:1px;height:19px;background:#808080;"></div>
<div style="left:1463px;top:155.03px;font-size:12px;line-height:12px;color:#000;transform:scaleX(0.917);transform-origin:left center;">ТрудМаш</div>
<div style="left:1528px;top:153px;width:87px;height:16px;background:#f0c8a0;"></div>
<div style="left:1527px;top:152px;width:88px;height:1px;background:#ffffff;"></div>
<div style="left:1527px;top:152px;width:1px;height:17px;background:#ffffff;"></div>
<div style="left:1615px;top:151px;width:1px;height:19px;background:#808080;"></div>
<div style="left:1529px;top:155.03px;font-size:12px;line-height:12px;color:#000;transform:scaleX(0.917);transform-origin:left center;">Всего</div>
<div style="left:1617px;top:153px;width:79px;height:16px;background:#f0c8a0;"></div>
<div style="left:1616px;top:152px;width:80px;height:1px;background:#ffffff;"></div>
<div style="left:1616px;top:152px;width:1px;height:17px;background:#ffffff;"></div>
<div style="left:1696px;top:151px;width:1px;height:19px;background:#808080;"></div>
<div style="left:1618px;top:155.03px;font-size:12px;line-height:12px;color:#000;transform:scaleX(0.917);transform-origin:left center;">ПЗ</div>
<div style="left:1698px;top:153px;width:35px;height:16px;background:#f0c8a0;"></div>
<div style="left:1697px;top:152px;width:36px;height:1px;background:#ffffff;"></div>
<div style="left:1697px;top:152px;width:1px;height:17px;background:#ffffff;"></div>
<div style="left:1699px;top:155.03px;font-size:12px;line-height:12px;color:#000;transform:scaleX(0.917);transform-origin:left center;">ОЗП</div>
<div style="left:18px;top:145.53px;font-size:12px;line-height:12px;color:#000;transform:scaleX(0.917);transform-origin:left center;">Тип</div>
<div style="left:49px;top:145.53px;font-size:12px;line-height:12px;color:#000;transform:scaleX(0.917);transform-origin:left center;">Утверждено</div>
<div style="left:118.5px;top:145.53px;font-size:12px;line-height:12px;color:#000;font-weight:bold;">№п/п</div>
<div style="left:156px;top:139.03px;font-size:12px;line-height:12px;color:#000;transform:scaleX(0.917);transform-origin:left center;">Связь с</div>
<div style="left:156px;top:152.03px;font-size:12px;line-height:12px;color:#000;transform:scaleX(0.917);transform-origin:left center;">ВОР</div>
<div style="left:211px;top:145.53px;font-size:12px;line-height:12px;color:#000;transform:scaleX(0.917);transform-origin:left center;">Обоснование</div>
<div style="left:286.5px;top:145.53px;font-size:12px;line-height:12px;color:#000;transform:scaleX(0.917);transform-origin:left center;">Наименование</div>
<div style="left:517px;top:139.03px;font-size:12px;line-height:12px;color:#000;transform:scaleX(0.917);transform-origin:left center;">Ед.изм.</div>
<div style="left:517px;top:152.03px;font-size:12px;line-height:12px;color:#000;transform:scaleX(0.917);transform-origin:left center;">(краткая)</div>
<div style="left:584px;top:137.03px;font-size:12px;line-height:12px;color:#000;transform:scaleX(0.917);transform-origin:left center;">Количество</div>
<div style="left:753px;top:137.03px;font-size:12px;line-height:12px;color:#000;transform:scaleX(0.917);transform-origin:left center;">Базовый уровень цен</div>
<div style="left:15px;top:170px;width:1718px;height:29px;background:#eaeafc;"></div>
<div style="left:3px;top:170px;width:11px;height:29px;background:#f0f0f0;"></div>
<div style="left:3px;top:170px;width:1px;height:29px;background:#ffffff;"></div>
<div style="left:3px;top:170px;width:11px;height:1px;background:#ffffff;"></div>
<div style="left:15px;top:170px;width:1px;height:29px;background:#ffffff;"></div>
<div style="left:47px;top:170px;width:1px;height:29px;background:#ffffff;"></div>
<div style="left:116px;top:170px;width:1px;height:29px;background:#ffffff;"></div>
<div style="left:154px;top:170px;width:1px;height:29px;background:#ffffff;"></div>
<div style="left:15px;top:170px;width:192px;height:1px;background:#ffffff;"></div>
<div style="left:3px;top:199px;width:205px;height:1px;background:#808080;"></div>
<div style="left:208px;top:199px;width:1525px;height:1px;background:#c0c0c0;"></div>
<div style="left:14px;top:170px;width:1px;height:30px;background:#808080;"></div>
<div style="left:46px;top:170px;width:1px;height:30px;background:#808080;"></div>
<div style="left:115px;top:170px;width:1px;height:30px;background:#808080;"></div>
<div style="left:153px;top:170px;width:1px;height:30px;background:#808080;"></div>
<div style="left:207px;top:170px;width:1px;height:30px;background:#808080;"></div>
<div style="left:283px;top:170px;width:1px;height:30px;background:#c0c0c0;"></div>
<div style="left:514px;top:170px;width:1px;height:30px;background:#c0c0c0;"></div>
<div style="left:581px;top:170px;width:1px;height:30px;background:#c0c0c0;"></div>
<div style="left:662px;top:170px;width:1px;height:30px;background:#c0c0c0;"></div>
<div style="left:750px;top:170px;width:1px;height:30px;background:#c0c0c0;"></div>
<div style="left:839px;top:170px;width:1px;height:30px;background:#c0c0c0;"></div>
<div style="left:932px;top:170px;width:1px;height:30px;background:#c0c0c0;"></div>
<div style="left:998px;top:170px;width:1px;height:30px;background:#c0c0c0;"></div>
<div style="left:1064px;top:170px;width:1px;height:30px;background:#c0c0c0;"></div>
<div style="left:1130px;top:170px;width:1px;height:30px;background:#c0c0c0;"></div>
<div style="left:1196px;top:170px;width:1px;height:30px;background:#c0c0c0;"></div>
<div style="left:1262px;top:170px;width:1px;height:30px;background:#c0c0c0;"></div>
<div style="left:1328px;top:170px;width:1px;height:30px;background:#c0c0c0;"></div>
<div style="left:1394px;top:170px;width:1px;height:30px;background:#c0c0c0;"></div>
<div style="left:1460px;top:170px;width:1px;height:30px;background:#c0c0c0;"></div>
<div style="left:1526px;top:170px;width:1px;height:30px;background:#c0c0c0;"></div>
<div style="left:1615px;top:170px;width:1px;height:30px;background:#c0c0c0;"></div>
<div style="left:1696px;top:170px;width:1px;height:30px;background:#c0c0c0;"></div>
<svg style="left:76px;top:179px;" width="11" height="11" viewBox="0 0 11 11"><rect x="0.5" y="0.5" width="10" height="10" fill="#fff" stroke="#8a8a8a"/></svg>
<div style="left:118px;top:172.03px;font-size:12px;line-height:12px;color:#1a1af0;transform:scaleX(0.917);transform-origin:left center;">ЛС1</div>
<div style="left:209px;top:171.53px;font-size:12px;line-height:12px;color:#0000f0;font-weight:bold;">ЛС-02...</div>
<svg style="left:258px;top:169px;" width="25" height="24" viewBox="0 0 25 24"><path d="M1 15 L12.9 12.3 L24 7 L16 23 L1 18 Z" fill="#fff" stroke="#3a7a5a" stroke-width="0.8"/><path d="M3 17 L15 20 L24 8" fill="none" stroke="#6a8ad0" stroke-width="1"/><path d="M1 14.4 L12.4 3.4 L24 1 L12.9 12.3 Z" fill="#48d878" stroke="#30a858" stroke-width="0.6"/><text x="11" y="18" font-size="6" font-weight="bold" fill="#000" font-family="Liberation Sans" transform="rotate(-38 14 16)">ЛС</text></svg>
<div style="left:286px;top:172.71px;font-size:13.6px;line-height:13.6px;color:#0000f0;font-weight:bold;">Новая локальная смета</div>
<div style="left:15px;top:200px;width:1718px;height:29px;background:#ffffff;"></div>
<div style="left:3px;top:200px;width:11px;height:29px;background:#f0f0f0;"></div>
<div style="left:3px;top:200px;width:1px;height:29px;background:#ffffff;"></div>
<div style="left:3px;top:200px;width:11px;height:1px;background:#ffffff;"></div>
<div style="left:15px;top:200px;width:1px;height:29px;background:#ffffff;"></div>
<div style="left:47px;top:200px;width:1px;height:29px;background:#ffffff;"></div>
<div style="left:116px;top:200px;width:1px;height:29px;background:#ffffff;"></div>
<div style="left:154px;top:200px;width:1px;height:29px;background:#ffffff;"></div>
<div style="left:15px;top:200px;width:192px;height:1px;background:#ffffff;"></div>
<div style="left:3px;top:229px;width:205px;height:1px;background:#808080;"></div>
<div style="left:208px;top:229px;width:1525px;height:1px;background:#c0c0c0;"></div>
<div style="left:14px;top:200px;width:1px;height:30px;background:#808080;"></div>
<div style="left:46px;top:200px;width:1px;height:30px;background:#808080;"></div>
<div style="left:115px;top:200px;width:1px;height:30px;background:#808080;"></div>
<div style="left:153px;top:200px;width:1px;height:30px;background:#808080;"></div>
<div style="left:207px;top:200px;width:1px;height:30px;background:#808080;"></div>
<div style="left:283px;top:200px;width:1px;height:30px;background:#c0c0c0;"></div>
<div style="left:514px;top:200px;width:1px;height:30px;background:#c0c0c0;"></div>
<div style="left:581px;top:200px;width:1px;height:30px;background:#c0c0c0;"></div>
<div style="left:662px;top:200px;width:1px;height:30px;background:#c0c0c0;"></div>
<div style="left:750px;top:200px;width:1px;height:30px;background:#c0c0c0;"></div>
<div style="left:839px;top:200px;width:1px;height:30px;background:#c0c0c0;"></div>
<div style="left:932px;top:200px;width:1px;height:30px;background:#c0c0c0;"></div>
<div style="left:998px;top:200px;width:1px;height:30px;background:#c0c0c0;"></div>
<div style="left:1064px;top:200px;width:1px;height:30px;background:#c0c0c0;"></div>
<div style="left:1130px;top:200px;width:1px;height:30px;background:#c0c0c0;"></div>
<div style="left:1196px;top:200px;width:1px;height:30px;background:#c0c0c0;"></div>
<div style="left:1262px;top:200px;width:1px;height:30px;background:#c0c0c0;"></div>
<div style="left:1328px;top:200px;width:1px;height:30px;background:#c0c0c0;"></div>
<div style="left:1394px;top:200px;width:1px;height:30px;background:#c0c0c0;"></div>
<div style="left:1460px;top:200px;width:1px;height:30px;background:#c0c0c0;"></div>
<div style="left:1526px;top:200px;width:1px;height:30px;background:#c0c0c0;"></div>
<div style="left:1615px;top:200px;width:1px;height:30px;background:#c0c0c0;"></div>
<div style="left:1696px;top:200px;width:1px;height:30px;background:#c0c0c0;"></div>
<svg style="left:76px;top:209px;" width="11" height="11" viewBox="0 0 11 11"><rect x="0.5" y="0.5" width="10" height="10" fill="#fff" stroke="#8a8a8a"/></svg>
<div style="left:118px;top:202.03px;font-size:12px;line-height:12px;color:#000;transform:scaleX(0.917);transform-origin:left center;">1</div>
<div style="left:210px;top:202.03px;font-size:12px;line-height:12px;color:#000;transform:scaleX(0.917);transform-origin:left center;">11-01-002-06</div>
<svg style="left:271px;top:214px;" width="8" height="14" viewBox="0 0 8 14"><path d="M1.6 10.5 V2.2 Q1.6 1.2 2.8 1.2 H4.4 Q5.4 1.2 5.4 2.2 V5" fill="none" stroke="#555" stroke-width="1.1"/><path d="M2.6 5 V11 Q2.6 12.6 4.3 12.6 Q6.4 12.6 6.4 11 V5" fill="none" stroke="#404040" stroke-width="1.5"/></svg>
<div style="left:284px;top:200px;width:230px;height:28px;background:#0078d7;box-sizing:border-box;border:1px solid #000;"></div>
<div style="left:284px;top:200px;width:230px;height:28px;background:transparent;box-sizing:border-box;border:1px dotted #ff9a30;"></div>
<div style="left:286.5px;top:202.03px;font-size:12px;line-height:12px;color:#fff;transform:scaleX(0.917);transform-origin:left center;">Устройство подстилающих слоев:</div>
<div style="left:286.5px;top:215.03px;font-size:12px;line-height:12px;color:#fff;transform:scaleX(0.917);transform-origin:left center;">глинобитных с маслянистыми добавками</div>
<div style="left:517.5px;top:202.03px;font-size:12px;line-height:12px;color:#000;transform:scaleX(0.917);transform-origin:left center;">м3</div>
<div style="left:584px;top:202.03px;font-size:12px;line-height:12px;color:#000;transform:scaleX(0.917);transform-origin:left center;">5</div>
<div style="left:436px;width:400px;text-align:right;top:202.03px;font-size:12px;line-height:12px;color:#000;transform:scaleX(0.917);transform-origin:right center;">9 250,91</div>
<div style="left:529px;width:400px;text-align:right;top:202.03px;font-size:12px;line-height:12px;color:#000;transform:scaleX(0.917);transform-origin:right center;">5 498,03</div>
<div style="left:595px;width:400px;text-align:right;top:202.03px;font-size:12px;line-height:12px;color:#000;transform:scaleX(0.917);transform-origin:right center;">0</div>
<div style="left:661px;width:400px;text-align:right;top:202.03px;font-size:12px;line-height:12px;color:#000;transform:scaleX(0.917);transform-origin:right center;">1 767,33</div>
<div style="left:727px;width:400px;text-align:right;top:202.03px;font-size:12px;line-height:12px;color:#000;transform:scaleX(0.917);transform-origin:right center;">2 120,27</div>
<div style="left:793px;width:400px;text-align:right;top:202.03px;font-size:12px;line-height:12px;color:#000;transform:scaleX(0.917);transform-origin:right center;">1 610,43</div>
<div style="left:859px;width:400px;text-align:right;top:202.03px;font-size:12px;line-height:12px;color:#000;transform:scaleX(0.917);transform-origin:right center;">0</div>
<div style="left:925px;width:400px;text-align:right;top:202.03px;font-size:12px;line-height:12px;color:#000;transform:scaleX(0.917);transform-origin:right center;">2 374,7</div>
<div style="left:991px;width:400px;text-align:right;top:202.03px;font-size:12px;line-height:12px;color:#000;transform:scaleX(0.917);transform-origin:right center;">1 378,18</div>
<div style="left:1057px;width:400px;text-align:right;top:202.03px;font-size:12px;line-height:12px;color:#000;transform:scaleX(0.917);transform-origin:right center;">0</div>
<div style="left:1123px;width:400px;text-align:right;top:202.03px;font-size:12px;line-height:12px;color:#000;transform:scaleX(0.917);transform-origin:right center;">6,25</div>
<div style="left:1212px;width:400px;text-align:right;top:202.03px;font-size:12px;line-height:12px;color:#000;transform:scaleX(0.917);transform-origin:right center;">2 539,5</div>
<div style="left:1293px;width:400px;text-align:right;top:202.03px;font-size:12px;line-height:12px;color:#000;transform:scaleX(0.917);transform-origin:right center;">2 539,5</div>
<div style="left:15px;top:230px;width:1718px;height:29px;background:#fde8e8;"></div>
<div style="left:3px;top:230px;width:11px;height:29px;background:#f0f0f0;"></div>
<div style="left:3px;top:230px;width:1px;height:29px;background:#ffffff;"></div>
<div style="left:3px;top:230px;width:11px;height:1px;background:#ffffff;"></div>
<div style="left:15px;top:230px;width:1px;height:29px;background:#ffffff;"></div>
<div style="left:47px;top:230px;width:1px;height:29px;background:#ffffff;"></div>
<div style="left:116px;top:230px;width:1px;height:29px;background:#ffffff;"></div>
<div style="left:154px;top:230px;width:1px;height:29px;background:#ffffff;"></div>
<div style="left:15px;top:230px;width:192px;height:1px;background:#ffffff;"></div>
<div style="left:3px;top:259px;width:205px;height:1px;background:#808080;"></div>
<div style="left:208px;top:259px;width:1525px;height:1px;background:#c0c0c0;"></div>
<div style="left:14px;top:230px;width:1px;height:30px;background:#808080;"></div>
<div style="left:46px;top:230px;width:1px;height:30px;background:#808080;"></div>
<div style="left:115px;top:230px;width:1px;height:30px;background:#808080;"></div>
<div style="left:153px;top:230px;width:1px;height:30px;background:#808080;"></div>
<div style="left:207px;top:230px;width:1px;height:30px;background:#808080;"></div>
<div style="left:283px;top:230px;width:1px;height:30px;background:#c0c0c0;"></div>
<div style="left:514px;top:230px;width:1px;height:30px;background:#c0c0c0;"></div>
<div style="left:581px;top:230px;width:1px;height:30px;background:#c0c0c0;"></div>
<div style="left:662px;top:230px;width:1px;height:30px;background:#c0c0c0;"></div>
<div style="left:750px;top:230px;width:1px;height:30px;background:#c0c0c0;"></div>
<div style="left:839px;top:230px;width:1px;height:30px;background:#c0c0c0;"></div>
<div style="left:932px;top:230px;width:1px;height:30px;background:#c0c0c0;"></div>
<div style="left:998px;top:230px;width:1px;height:30px;background:#c0c0c0;"></div>
<div style="left:1064px;top:230px;width:1px;height:30px;background:#c0c0c0;"></div>
<div style="left:1130px;top:230px;width:1px;height:30px;background:#c0c0c0;"></div>
<div style="left:1196px;top:230px;width:1px;height:30px;background:#c0c0c0;"></div>
<div style="left:1262px;top:230px;width:1px;height:30px;background:#c0c0c0;"></div>
<div style="left:1328px;top:230px;width:1px;height:30px;background:#c0c0c0;"></div>
<div style="left:1394px;top:230px;width:1px;height:30px;background:#c0c0c0;"></div>
<div style="left:1460px;top:230px;width:1px;height:30px;background:#c0c0c0;"></div>
<div style="left:1526px;top:230px;width:1px;height:30px;background:#c0c0c0;"></div>
<div style="left:1615px;top:230px;width:1px;height:30px;background:#c0c0c0;"></div>
<div style="left:1696px;top:230px;width:1px;height:30px;background:#c0c0c0;"></div>
<svg style="left:22px;top:241px;" width="17" height="8" viewBox="0 0 17 8"><rect x="5.3" y="0.3" width="5.2" height="3.2" rx="1.5" fill="#ee7000" stroke="#a84800" stroke-width="0.6"/><rect x="6.8" y="1.2" width="2.5" height="0.8" fill="#ffb050"/><rect x="2.3" y="2.3" width="5.2" height="3.2" rx="1.5" fill="#ee7000" stroke="#a84800" stroke-width="0.6"/><rect x="3.8" y="3.2" width="2.5" height="0.8" fill="#ffb050"/><rect x="7.8" y="2.3" width="5.2" height="3.2" rx="1.5" fill="#ee7000" stroke="#a84800" stroke-width="0.6"/><rect x="9.3" y="3.2" width="2.5" height="0.8" fill="#ffb050"/><rect x="0.3" y="4.3" width="5.2" height="3.2" rx="1.5" fill="#ee7000" stroke="#a84800" stroke-width="0.6"/><rect x="1.8" y="5.2" width="2.5" height="0.8" fill="#ffb050"/><rect x="5.8" y="4.3" width="5.2" height="3.2" rx="1.5" fill="#ee7000" stroke="#a84800" stroke-width="0.6"/><rect x="7.3" y="5.2" width="2.5" height="0.8" fill="#ffb050"/><rect x="11.3" y="4.3" width="5.2" height="3.2" rx="1.5" fill="#ee7000" stroke="#a84800" stroke-width="0.6"/><rect x="12.8" y="5.2" width="2.5" height="0.8" fill="#ffb050"/></svg>
<div style="left:118px;top:232.03px;font-size:12px;line-height:12px;color:#000;transform:scaleX(0.917);transform-origin:left center;">1,1</div>
<div style="left:210px;top:232.03px;font-size:12px;line-height:12px;color:#000;transform:scaleX(0.917);transform-origin:left center;">01.2.01.01</div>
<svg style="left:271px;top:244px;" width="8" height="14" viewBox="0 0 8 14"><path d="M1.6 10.5 V2.2 Q1.6 1.2 2.8 1.2 H4.4 Q5.4 1.2 5.4 2.2 V5" fill="none" stroke="#555" stroke-width="1.1"/><path d="M2.6 5 V11 Q2.6 12.6 4.3 12.6 Q6.4 12.6 6.4 11 V5" fill="none" stroke="#404040" stroke-width="1.5"/></svg>
<div style="left:286.5px;top:232.03px;font-size:12px;line-height:12px;color:#000;transform:scaleX(0.917);transform-origin:left center;">Битумы нефтяные дорожные</div>
<div style="left:517.5px;top:232.03px;font-size:12px;line-height:12px;color:#000;transform:scaleX(0.917);transform-origin:left center;">т</div>
<div style="left:584px;top:232.03px;font-size:12px;line-height:12px;color:#000;transform:scaleX(0.917);transform-origin:left center;">0,4</div>
<div style="left:665px;top:232.03px;font-size:12px;line-height:12px;color:#000;transform:scaleX(0.917);transform-origin:left center;">0,08</div>
<div style="left:595.5px;width:400px;text-align:center;top:232.03px;font-size:12px;line-height:12px;color:#000;transform:scaleX(0.917);transform-origin:center center;">-</div>
<div style="left:529px;width:400px;text-align:right;top:232.03px;font-size:12px;line-height:12px;color:#000;transform:scaleX(0.917);transform-origin:right center;">0</div>
<div style="left:595px;width:400px;text-align:right;top:232.03px;font-size:12px;line-height:12px;color:#000;transform:scaleX(0.917);transform-origin:right center;">0</div>
<div style="left:661px;width:400px;text-align:right;top:232.03px;font-size:12px;line-height:12px;color:#000;transform:scaleX(0.917);transform-origin:right center;">0</div>
<div style="left:727px;width:400px;text-align:right;top:232.03px;font-size:12px;line-height:12px;color:#000;transform:scaleX(0.917);transform-origin:right center;">0</div>
<div style="left:793px;width:400px;text-align:right;top:232.03px;font-size:12px;line-height:12px;color:#000;transform:scaleX(0.917);transform-origin:right center;">0</div>
<div style="left:859px;width:400px;text-align:right;top:232.03px;font-size:12px;line-height:12px;color:#000;transform:scaleX(0.917);transform-origin:right center;">0</div>
<div style="left:925px;width:400px;text-align:right;top:232.03px;font-size:12px;line-height:12px;color:#000;transform:scaleX(0.917);transform-origin:right center;">0</div>
<div style="left:991px;width:400px;text-align:right;top:232.03px;font-size:12px;line-height:12px;color:#000;transform:scaleX(0.917);transform-origin:right center;">0</div>
<div style="left:1057px;width:400px;text-align:right;top:232.03px;font-size:12px;line-height:12px;color:#000;transform:scaleX(0.917);transform-origin:right center;">0</div>
<div style="left:1123px;width:400px;text-align:right;top:232.03px;font-size:12px;line-height:12px;color:#000;transform:scaleX(0.917);transform-origin:right center;">0</div>
<div style="left:1212px;width:400px;text-align:right;top:232.03px;font-size:12px;line-height:12px;color:#000;transform:scaleX(0.917);transform-origin:right center;">0</div>
<div style="left:1293px;width:400px;text-align:right;top:232.03px;font-size:12px;line-height:12px;color:#000;transform:scaleX(0.917);transform-origin:right center;">0</div>
<div style="left:15px;top:260px;width:1718px;height:29px;background:#fde8e8;"></div>
<div style="left:3px;top:260px;width:11px;height:29px;background:#f0f0f0;"></div>
<div style="left:3px;top:260px;width:1px;height:29px;background:#ffffff;"></div>
<div style="left:3px;top:260px;width:11px;height:1px;background:#ffffff;"></div>
<div style="left:15px;top:260px;width:1px;height:29px;background:#ffffff;"></div>
<div style="left:47px;top:260px;width:1px;height:29px;background:#ffffff;"></div>
<div style="left:116px;top:260px;width:1px;height:29px;background:#ffffff;"></div>
<div style="left:154px;top:260px;width:1px;height:29px;background:#ffffff;"></div>
<div style="left:15px;top:260px;width:192px;height:1px;background:#ffffff;"></div>
<div style="left:3px;top:289px;width:205px;height:1px;background:#808080;"></div>
<div style="left:208px;top:289px;width:1525px;height:1px;background:#c0c0c0;"></div>
<div style="left:14px;top:260px;width:1px;height:30px;background:#808080;"></div>
<div style="left:46px;top:260px;width:1px;height:30px;background:#808080;"></div>
<div style="left:115px;top:260px;width:1px;height:30px;background:#808080;"></div>
<div style="left:153px;top:260px;width:1px;height:30px;background:#808080;"></div>
<div style="left:207px;top:260px;width:1px;height:30px;background:#808080;"></div>
<div style="left:283px;top:260px;width:1px;height:30px;background:#c0c0c0;"></div>
<div style="left:514px;top:260px;width:1px;height:30px;background:#c0c0c0;"></div>
<div style="left:581px;top:260px;width:1px;height:30px;background:#c0c0c0;"></div>
<div style="left:662px;top:260px;width:1px;height:30px;background:#c0c0c0;"></div>
<div style="left:750px;top:260px;width:1px;height:30px;background:#c0c0c0;"></div>
<div style="left:839px;top:260px;width:1px;height:30px;background:#c0c0c0;"></div>
<div style="left:932px;top:260px;width:1px;height:30px;background:#c0c0c0;"></div>
<div style="left:998px;top:260px;width:1px;height:30px;background:#c0c0c0;"></div>
<div style="left:1064px;top:260px;width:1px;height:30px;background:#c0c0c0;"></div>
<div style="left:1130px;top:260px;width:1px;height:30px;background:#c0c0c0;"></div>
<div style="left:1196px;top:260px;width:1px;height:30px;background:#c0c0c0;"></div>
<div style="left:1262px;top:260px;width:1px;height:30px;background:#c0c0c0;"></div>
<div style="left:1328px;top:260px;width:1px;height:30px;background:#c0c0c0;"></div>
<div style="left:1394px;top:260px;width:1px;height:30px;background:#c0c0c0;"></div>
<div style="left:1460px;top:260px;width:1px;height:30px;background:#c0c0c0;"></div>
<div style="left:1526px;top:260px;width:1px;height:30px;background:#c0c0c0;"></div>
<div style="left:1615px;top:260px;width:1px;height:30px;background:#c0c0c0;"></div>
<div style="left:1696px;top:260px;width:1px;height:30px;background:#c0c0c0;"></div>
<svg style="left:22px;top:271px;" width="17" height="8" viewBox="0 0 17 8"><rect x="5.3" y="0.3" width="5.2" height="3.2" rx="1.5" fill="#ee7000" stroke="#a84800" stroke-width="0.6"/><rect x="6.8" y="1.2" width="2.5" height="0.8" fill="#ffb050"/><rect x="2.3" y="2.3" width="5.2" height="3.2" rx="1.5" fill="#ee7000" stroke="#a84800" stroke-width="0.6"/><rect x="3.8" y="3.2" width="2.5" height="0.8" fill="#ffb050"/><rect x="7.8" y="2.3" width="5.2" height="3.2" rx="1.5" fill="#ee7000" stroke="#a84800" stroke-width="0.6"/><rect x="9.3" y="3.2" width="2.5" height="0.8" fill="#ffb050"/><rect x="0.3" y="4.3" width="5.2" height="3.2" rx="1.5" fill="#ee7000" stroke="#a84800" stroke-width="0.6"/><rect x="1.8" y="5.2" width="2.5" height="0.8" fill="#ffb050"/><rect x="5.8" y="4.3" width="5.2" height="3.2" rx="1.5" fill="#ee7000" stroke="#a84800" stroke-width="0.6"/><rect x="7.3" y="5.2" width="2.5" height="0.8" fill="#ffb050"/><rect x="11.3" y="4.3" width="5.2" height="3.2" rx="1.5" fill="#ee7000" stroke="#a84800" stroke-width="0.6"/><rect x="12.8" y="5.2" width="2.5" height="0.8" fill="#ffb050"/></svg>
<div style="left:118px;top:262.03px;font-size:12px;line-height:12px;color:#000;transform:scaleX(0.917);transform-origin:left center;">1,2</div>
<div style="left:210px;top:262.03px;font-size:12px;line-height:12px;color:#000;transform:scaleX(0.917);transform-origin:left center;">02.3.01.02</div>
<svg style="left:271px;top:274px;" width="8" height="14" viewBox="0 0 8 14"><path d="M1.6 10.5 V2.2 Q1.6 1.2 2.8 1.2 H4.4 Q5.4 1.2 5.4 2.2 V5" fill="none" stroke="#555" stroke-width="1.1"/><path d="M2.6 5 V11 Q2.6 12.6 4.3 12.6 Q6.4 12.6 6.4 11 V5" fill="none" stroke="#404040" stroke-width="1.5"/></svg>
<div style="left:286.5px;top:262.03px;font-size:12px;line-height:12px;color:#000;transform:scaleX(0.917);transform-origin:left center;">Песок для строительных работ природный</div>
<div style="left:517.5px;top:262.03px;font-size:12px;line-height:12px;color:#000;transform:scaleX(0.917);transform-origin:left center;">м3</div>
<div style="left:584px;top:262.03px;font-size:12px;line-height:12px;color:#000;transform:scaleX(0.917);transform-origin:left center;">4,95</div>
<div style="left:665px;top:262.03px;font-size:12px;line-height:12px;color:#000;transform:scaleX(0.917);transform-origin:left center;">0,99</div>
<div style="left:595.5px;width:400px;text-align:center;top:262.03px;font-size:12px;line-height:12px;color:#000;transform:scaleX(0.917);transform-origin:center center;">-</div>
<div style="left:529px;width:400px;text-align:right;top:262.03px;font-size:12px;line-height:12px;color:#000;transform:scaleX(0.917);transform-origin:right center;">0</div>
<div style="left:595px;width:400px;text-align:right;top:262.03px;font-size:12px;line-height:12px;color:#000;transform:scaleX(0.917);transform-origin:right center;">0</div>
<div style="left:661px;width:400px;text-align:right;top:262.03px;font-size:12px;line-height:12px;color:#000;transform:scaleX(0.917);transform-origin:right center;">0</div>
<div style="left:727px;width:400px;text-align:right;top:262.03px;font-size:12px;line-height:12px;color:#000;transform:scaleX(0.917);transform-origin:right center;">0</div>
<div style="left:793px;width:400px;text-align:right;top:262.03px;font-size:12px;line-height:12px;color:#000;transform:scaleX(0.917);transform-origin:right center;">0</div>
<div style="left:859px;width:400px;text-align:right;top:262.03px;font-size:12px;line-height:12px;color:#000;transform:scaleX(0.917);transform-origin:right center;">0</div>
<div style="left:925px;width:400px;text-align:right;top:262.03px;font-size:12px;line-height:12px;color:#000;transform:scaleX(0.917);transform-origin:right center;">0</div>
<div style="left:991px;width:400px;text-align:right;top:262.03px;font-size:12px;line-height:12px;color:#000;transform:scaleX(0.917);transform-origin:right center;">0</div>
<div style="left:1057px;width:400px;text-align:right;top:262.03px;font-size:12px;line-height:12px;color:#000;transform:scaleX(0.917);transform-origin:right center;">0</div>
<div style="left:1123px;width:400px;text-align:right;top:262.03px;font-size:12px;line-height:12px;color:#000;transform:scaleX(0.917);transform-origin:right center;">0</div>
<div style="left:1212px;width:400px;text-align:right;top:262.03px;font-size:12px;line-height:12px;color:#000;transform:scaleX(0.917);transform-origin:right center;">0</div>
<div style="left:1293px;width:400px;text-align:right;top:262.03px;font-size:12px;line-height:12px;color:#000;transform:scaleX(0.917);transform-origin:right center;">0</div>
<div style="left:15px;top:290px;width:1718px;height:29px;background:#ffffff;"></div>
<div style="left:3px;top:290px;width:11px;height:29px;background:#f0f0f0;"></div>
<div style="left:3px;top:290px;width:1px;height:29px;background:#ffffff;"></div>
<div style="left:3px;top:290px;width:11px;height:1px;background:#ffffff;"></div>
<div style="left:15px;top:290px;width:1px;height:29px;background:#ffffff;"></div>
<div style="left:47px;top:290px;width:1px;height:29px;background:#ffffff;"></div>
<div style="left:116px;top:290px;width:1px;height:29px;background:#ffffff;"></div>
<div style="left:154px;top:290px;width:1px;height:29px;background:#ffffff;"></div>
<div style="left:15px;top:290px;width:192px;height:1px;background:#ffffff;"></div>
<div style="left:3px;top:319px;width:205px;height:1px;background:#808080;"></div>
<div style="left:208px;top:319px;width:1525px;height:1px;background:#c0c0c0;"></div>
<div style="left:14px;top:290px;width:1px;height:30px;background:#808080;"></div>
<div style="left:46px;top:290px;width:1px;height:30px;background:#808080;"></div>
<div style="left:115px;top:290px;width:1px;height:30px;background:#808080;"></div>
<div style="left:153px;top:290px;width:1px;height:30px;background:#808080;"></div>
<div style="left:207px;top:290px;width:1px;height:30px;background:#808080;"></div>
<div style="left:283px;top:290px;width:1px;height:30px;background:#c0c0c0;"></div>
<div style="left:514px;top:290px;width:1px;height:30px;background:#c0c0c0;"></div>
<div style="left:581px;top:290px;width:1px;height:30px;background:#c0c0c0;"></div>
<div style="left:662px;top:290px;width:1px;height:30px;background:#c0c0c0;"></div>
<div style="left:750px;top:290px;width:1px;height:30px;background:#c0c0c0;"></div>
<div style="left:839px;top:290px;width:1px;height:30px;background:#c0c0c0;"></div>
<div style="left:932px;top:290px;width:1px;height:30px;background:#c0c0c0;"></div>
<div style="left:998px;top:290px;width:1px;height:30px;background:#c0c0c0;"></div>
<div style="left:1064px;top:290px;width:1px;height:30px;background:#c0c0c0;"></div>
<div style="left:1130px;top:290px;width:1px;height:30px;background:#c0c0c0;"></div>
<div style="left:1196px;top:290px;width:1px;height:30px;background:#c0c0c0;"></div>
<div style="left:1262px;top:290px;width:1px;height:30px;background:#c0c0c0;"></div>
<div style="left:1328px;top:290px;width:1px;height:30px;background:#c0c0c0;"></div>
<div style="left:1394px;top:290px;width:1px;height:30px;background:#c0c0c0;"></div>
<div style="left:1460px;top:290px;width:1px;height:30px;background:#c0c0c0;"></div>
<div style="left:1526px;top:290px;width:1px;height:30px;background:#c0c0c0;"></div>
<div style="left:1615px;top:290px;width:1px;height:30px;background:#c0c0c0;"></div>
<div style="left:1696px;top:290px;width:1px;height:30px;background:#c0c0c0;"></div>
<svg style="left:76px;top:299px;" width="11" height="11" viewBox="0 0 11 11"><rect x="0.5" y="0.5" width="10" height="10" fill="#fff" stroke="#8a8a8a"/></svg>
<div style="left:118px;top:292.03px;font-size:12px;line-height:12px;color:#000;transform:scaleX(0.917);transform-origin:left center;">2</div>
<div style="left:210px;top:292.03px;font-size:12px;line-height:12px;color:#000;transform:scaleX(0.917);transform-origin:left center;">07-01-001-01</div>
<svg style="left:271px;top:304px;" width="8" height="14" viewBox="0 0 8 14"><path d="M1.6 10.5 V2.2 Q1.6 1.2 2.8 1.2 H4.4 Q5.4 1.2 5.4 2.2 V5" fill="none" stroke="#555" stroke-width="1.1"/><path d="M2.6 5 V11 Q2.6 12.6 4.3 12.6 Q6.4 12.6 6.4 11 V5" fill="none" stroke="#404040" stroke-width="1.5"/></svg>
<div style="left:286.5px;top:292.03px;font-size:12px;line-height:12px;color:#000;transform:scaleX(0.917);transform-origin:left center;">Укладка блоков и плит ленточных</div>
<div style="left:286.5px;top:305.03px;font-size:12px;line-height:12px;color:#000;transform:scaleX(0.917);transform-origin:left center;">фундаментов при глубине котлована до 4 м,</div>
<div style="left:517.5px;top:292.03px;font-size:12px;line-height:12px;color:#000;transform:scaleX(0.917);transform-origin:left center;">100 ШТ</div>
<div style="left:584px;top:292.03px;font-size:12px;line-height:12px;color:#000;transform:scaleX(0.917);transform-origin:left center;">0,03</div>
<div style="left:436px;width:400px;text-align:right;top:292.03px;font-size:12px;line-height:12px;color:#000;transform:scaleX(0.917);transform-origin:right center;">2 116,99</div>
<div style="left:529px;width:400px;text-align:right;top:292.03px;font-size:12px;line-height:12px;color:#000;transform:scaleX(0.917);transform-origin:right center;">1 520,08</div>
<div style="left:595px;width:400px;text-align:right;top:292.03px;font-size:12px;line-height:12px;color:#000;transform:scaleX(0.917);transform-origin:right center;">0</div>
<div style="left:661px;width:400px;text-align:right;top:292.03px;font-size:12px;line-height:12px;color:#000;transform:scaleX(0.917);transform-origin:right center;">1 193,9</div>
<div style="left:727px;width:400px;text-align:right;top:292.03px;font-size:12px;line-height:12px;color:#000;transform:scaleX(0.917);transform-origin:right center;">326,18</div>
<div style="left:793px;width:400px;text-align:right;top:292.03px;font-size:12px;line-height:12px;color:#000;transform:scaleX(0.917);transform-origin:right center;">0</div>
<div style="left:859px;width:400px;text-align:right;top:292.03px;font-size:12px;line-height:12px;color:#000;transform:scaleX(0.917);transform-origin:right center;">0</div>
<div style="left:925px;width:400px;text-align:right;top:292.03px;font-size:12px;line-height:12px;color:#000;transform:scaleX(0.917);transform-origin:right center;">358,8</div>
<div style="left:991px;width:400px;text-align:right;top:292.03px;font-size:12px;line-height:12px;color:#000;transform:scaleX(0.917);transform-origin:right center;">238,11</div>
<div style="left:1057px;width:400px;text-align:right;top:292.03px;font-size:12px;line-height:12px;color:#000;transform:scaleX(0.917);transform-origin:right center;">0</div>
<div style="left:1123px;width:400px;text-align:right;top:292.03px;font-size:12px;line-height:12px;color:#000;transform:scaleX(0.917);transform-origin:right center;">0,7383</div>
<div style="left:1212px;width:400px;text-align:right;top:292.03px;font-size:12px;line-height:12px;color:#000;transform:scaleX(0.917);transform-origin:right center;">3 707,34</div>
<div style="left:1293px;width:400px;text-align:right;top:292.03px;font-size:12px;line-height:12px;color:#000;transform:scaleX(0.917);transform-origin:right center;">3 707,34</div>
<div style="left:15px;top:320px;width:1718px;height:29px;background:#fde8e8;"></div>
<div style="left:3px;top:320px;width:11px;height:29px;background:#f0f0f0;"></div>
<div style="left:3px;top:320px;width:1px;height:29px;background:#ffffff;"></div>
<div style="left:3px;top:320px;width:11px;height:1px;background:#ffffff;"></div>
<div style="left:15px;top:320px;width:1px;height:29px;background:#ffffff;"></div>
<div style="left:47px;top:320px;width:1px;height:29px;background:#ffffff;"></div>
<div style="left:116px;top:320px;width:1px;height:29px;background:#ffffff;"></div>
<div style="left:154px;top:320px;width:1px;height:29px;background:#ffffff;"></div>
<div style="left:15px;top:320px;width:192px;height:1px;background:#ffffff;"></div>
<div style="left:3px;top:349px;width:205px;height:1px;background:#808080;"></div>
<div style="left:208px;top:349px;width:1525px;height:1px;background:#c0c0c0;"></div>
<div style="left:14px;top:320px;width:1px;height:30px;background:#808080;"></div>
<div style="left:46px;top:320px;width:1px;height:30px;background:#808080;"></div>
<div style="left:115px;top:320px;width:1px;height:30px;background:#808080;"></div>
<div style="left:153px;top:320px;width:1px;height:30px;background:#808080;"></div>
<div style="left:207px;top:320px;width:1px;height:30px;background:#808080;"></div>
<div style="left:283px;top:320px;width:1px;height:30px;background:#c0c0c0;"></div>
<div style="left:514px;top:320px;width:1px;height:30px;background:#c0c0c0;"></div>
<div style="left:581px;top:320px;width:1px;height:30px;background:#c0c0c0;"></div>
<div style="left:662px;top:320px;width:1px;height:30px;background:#c0c0c0;"></div>
<div style="left:750px;top:320px;width:1px;height:30px;background:#c0c0c0;"></div>
<div style="left:839px;top:320px;width:1px;height:30px;background:#c0c0c0;"></div>
<div style="left:932px;top:320px;width:1px;height:30px;background:#c0c0c0;"></div>
<div style="left:998px;top:320px;width:1px;height:30px;background:#c0c0c0;"></div>
<div style="left:1064px;top:320px;width:1px;height:30px;background:#c0c0c0;"></div>
<div style="left:1130px;top:320px;width:1px;height:30px;background:#c0c0c0;"></div>
<div style="left:1196px;top:320px;width:1px;height:30px;background:#c0c0c0;"></div>
<div style="left:1262px;top:320px;width:1px;height:30px;background:#c0c0c0;"></div>
<div style="left:1328px;top:320px;width:1px;height:30px;background:#c0c0c0;"></div>
<div style="left:1394px;top:320px;width:1px;height:30px;background:#c0c0c0;"></div>
<div style="left:1460px;top:320px;width:1px;height:30px;background:#c0c0c0;"></div>
<div style="left:1526px;top:320px;width:1px;height:30px;background:#c0c0c0;"></div>
<div style="left:1615px;top:320px;width:1px;height:30px;background:#c0c0c0;"></div>
<div style="left:1696px;top:320px;width:1px;height:30px;background:#c0c0c0;"></div>
<svg style="left:22px;top:331px;" width="17" height="8" viewBox="0 0 17 8"><rect x="5.3" y="0.3" width="5.2" height="3.2" rx="1.5" fill="#ee7000" stroke="#a84800" stroke-width="0.6"/><rect x="6.8" y="1.2" width="2.5" height="0.8" fill="#ffb050"/><rect x="2.3" y="2.3" width="5.2" height="3.2" rx="1.5" fill="#ee7000" stroke="#a84800" stroke-width="0.6"/><rect x="3.8" y="3.2" width="2.5" height="0.8" fill="#ffb050"/><rect x="7.8" y="2.3" width="5.2" height="3.2" rx="1.5" fill="#ee7000" stroke="#a84800" stroke-width="0.6"/><rect x="9.3" y="3.2" width="2.5" height="0.8" fill="#ffb050"/><rect x="0.3" y="4.3" width="5.2" height="3.2" rx="1.5" fill="#ee7000" stroke="#a84800" stroke-width="0.6"/><rect x="1.8" y="5.2" width="2.5" height="0.8" fill="#ffb050"/><rect x="5.8" y="4.3" width="5.2" height="3.2" rx="1.5" fill="#ee7000" stroke="#a84800" stroke-width="0.6"/><rect x="7.3" y="5.2" width="2.5" height="0.8" fill="#ffb050"/><rect x="11.3" y="4.3" width="5.2" height="3.2" rx="1.5" fill="#ee7000" stroke="#a84800" stroke-width="0.6"/><rect x="12.8" y="5.2" width="2.5" height="0.8" fill="#ffb050"/></svg>
<div style="left:118px;top:322.03px;font-size:12px;line-height:12px;color:#000;transform:scaleX(0.917);transform-origin:left center;">2,1</div>
<div style="left:210px;top:322.03px;font-size:12px;line-height:12px;color:#000;transform:scaleX(0.917);transform-origin:left center;">02.3.01.02</div>
<svg style="left:271px;top:334px;" width="8" height="14" viewBox="0 0 8 14"><path d="M1.6 10.5 V2.2 Q1.6 1.2 2.8 1.2 H4.4 Q5.4 1.2 5.4 2.2 V5" fill="none" stroke="#555" stroke-width="1.1"/><path d="M2.6 5 V11 Q2.6 12.6 4.3 12.6 Q6.4 12.6 6.4 11 V5" fill="none" stroke="#404040" stroke-width="1.5"/></svg>
<div style="left:286.5px;top:322.03px;font-size:12px;line-height:12px;color:#000;transform:scaleX(0.917);transform-origin:left center;">Песок для строительных работ природный</div>
<div style="left:517.5px;top:322.03px;font-size:12px;line-height:12px;color:#000;transform:scaleX(0.917);transform-origin:left center;">м3</div>
<div style="left:584px;top:322.03px;font-size:12px;line-height:12px;color:#000;transform:scaleX(0.917);transform-origin:left center;">0,288</div>
<div style="left:665px;top:322.03px;font-size:12px;line-height:12px;color:#000;transform:scaleX(0.917);transform-origin:left center;">9,6</div>
<div style="left:595.5px;width:400px;text-align:center;top:322.03px;font-size:12px;line-height:12px;color:#000;transform:scaleX(0.917);transform-origin:center center;">-</div>
<div style="left:529px;width:400px;text-align:right;top:322.03px;font-size:12px;line-height:12px;color:#000;transform:scaleX(0.917);transform-origin:right center;">0</div>
<div style="left:595px;width:400px;text-align:right;top:322.03px;font-size:12px;line-height:12px;color:#000;transform:scaleX(0.917);transform-origin:right center;">0</div>
<div style="left:661px;width:400px;text-align:right;top:322.03px;font-size:12px;line-height:12px;color:#000;transform:scaleX(0.917);transform-origin:right center;">0</div>
<div style="left:727px;width:400px;text-align:right;top:322.03px;font-size:12px;line-height:12px;color:#000;transform:scaleX(0.917);transform-origin:right center;">0</div>
<div style="left:793px;width:400px;text-align:right;top:322.03px;font-size:12px;line-height:12px;color:#000;transform:scaleX(0.917);transform-origin:right center;">0</div>
<div style="left:859px;width:400px;text-align:right;top:322.03px;font-size:12px;line-height:12px;color:#000;transform:scaleX(0.917);transform-origin:right center;">0</div>
<div style="left:925px;width:400px;text-align:right;top:322.03px;font-size:12px;line-height:12px;color:#000;transform:scaleX(0.917);transform-origin:right center;">0</div>
<div style="left:991px;width:400px;text-align:right;top:322.03px;font-size:12px;line-height:12px;color:#000;transform:scaleX(0.917);transform-origin:right center;">0</div>
<div style="left:1057px;width:400px;text-align:right;top:322.03px;font-size:12px;line-height:12px;color:#000;transform:scaleX(0.917);transform-origin:right center;">0</div>
<div style="left:1123px;width:400px;text-align:right;top:322.03px;font-size:12px;line-height:12px;color:#000;transform:scaleX(0.917);transform-origin:right center;">0</div>
<div style="left:1212px;width:400px;text-align:right;top:322.03px;font-size:12px;line-height:12px;color:#000;transform:scaleX(0.917);transform-origin:right center;">0</div>
<div style="left:1293px;width:400px;text-align:right;top:322.03px;font-size:12px;line-height:12px;color:#000;transform:scaleX(0.917);transform-origin:right center;">0</div>
<div style="left:15px;top:350px;width:1718px;height:29px;background:#fde8e8;"></div>
<div style="left:3px;top:350px;width:11px;height:29px;background:#f0f0f0;"></div>
<div style="left:3px;top:350px;width:1px;height:29px;background:#ffffff;"></div>
<div style="left:3px;top:350px;width:11px;height:1px;background:#ffffff;"></div>
<div style="left:15px;top:350px;width:1px;height:29px;background:#ffffff;"></div>
<div style="left:47px;top:350px;width:1px;height:29px;background:#ffffff;"></div>
<div style="left:116px;top:350px;width:1px;height:29px;background:#ffffff;"></div>
<div style="left:154px;top:350px;width:1px;height:29px;background:#ffffff;"></div>
<div style="left:15px;top:350px;width:192px;height:1px;background:#ffffff;"></div>
<div style="left:3px;top:379px;width:205px;height:1px;background:#808080;"></div>
<div style="left:208px;top:379px;width:1525px;height:1px;background:#c0c0c0;"></div>
<div style="left:14px;top:350px;width:1px;height:30px;background:#808080;"></div>
<div style="left:46px;top:350px;width:1px;height:30px;background:#808080;"></div>
<div style="left:115px;top:350px;width:1px;height:30px;background:#808080;"></div>
<div style="left:153px;top:350px;width:1px;height:30px;background:#808080;"></div>
<div style="left:207px;top:350px;width:1px;height:30px;background:#808080;"></div>
<div style="left:283px;top:350px;width:1px;height:30px;background:#c0c0c0;"></div>
<div style="left:514px;top:350px;width:1px;height:30px;background:#c0c0c0;"></div>
<div style="left:581px;top:350px;width:1px;height:30px;background:#c0c0c0;"></div>
<div style="left:662px;top:350px;width:1px;height:30px;background:#c0c0c0;"></div>
<div style="left:750px;top:350px;width:1px;height:30px;background:#c0c0c0;"></div>
<div style="left:839px;top:350px;width:1px;height:30px;background:#c0c0c0;"></div>
<div style="left:932px;top:350px;width:1px;height:30px;background:#c0c0c0;"></div>
<div style="left:998px;top:350px;width:1px;height:30px;background:#c0c0c0;"></div>
<div style="left:1064px;top:350px;width:1px;height:30px;background:#c0c0c0;"></div>
<div style="left:1130px;top:350px;width:1px;height:30px;background:#c0c0c0;"></div>
<div style="left:1196px;top:350px;width:1px;height:30px;background:#c0c0c0;"></div>
<div style="left:1262px;top:350px;width:1px;height:30px;background:#c0c0c0;"></div>
<div style="left:1328px;top:350px;width:1px;height:30px;background:#c0c0c0;"></div>
<div style="left:1394px;top:350px;width:1px;height:30px;background:#c0c0c0;"></div>
<div style="left:1460px;top:350px;width:1px;height:30px;background:#c0c0c0;"></div>
<div style="left:1526px;top:350px;width:1px;height:30px;background:#c0c0c0;"></div>
<div style="left:1615px;top:350px;width:1px;height:30px;background:#c0c0c0;"></div>
<div style="left:1696px;top:350px;width:1px;height:30px;background:#c0c0c0;"></div>
<svg style="left:22px;top:361px;" width="17" height="8" viewBox="0 0 17 8"><rect x="5.3" y="0.3" width="5.2" height="3.2" rx="1.5" fill="#ee7000" stroke="#a84800" stroke-width="0.6"/><rect x="6.8" y="1.2" width="2.5" height="0.8" fill="#ffb050"/><rect x="2.3" y="2.3" width="5.2" height="3.2" rx="1.5" fill="#ee7000" stroke="#a84800" stroke-width="0.6"/><rect x="3.8" y="3.2" width="2.5" height="0.8" fill="#ffb050"/><rect x="7.8" y="2.3" width="5.2" height="3.2" rx="1.5" fill="#ee7000" stroke="#a84800" stroke-width="0.6"/><rect x="9.3" y="3.2" width="2.5" height="0.8" fill="#ffb050"/><rect x="0.3" y="4.3" width="5.2" height="3.2" rx="1.5" fill="#ee7000" stroke="#a84800" stroke-width="0.6"/><rect x="1.8" y="5.2" width="2.5" height="0.8" fill="#ffb050"/><rect x="5.8" y="4.3" width="5.2" height="3.2" rx="1.5" fill="#ee7000" stroke="#a84800" stroke-width="0.6"/><rect x="7.3" y="5.2" width="2.5" height="0.8" fill="#ffb050"/><rect x="11.3" y="4.3" width="5.2" height="3.2" rx="1.5" fill="#ee7000" stroke="#a84800" stroke-width="0.6"/><rect x="12.8" y="5.2" width="2.5" height="0.8" fill="#ffb050"/></svg>
<div style="left:118px;top:352.03px;font-size:12px;line-height:12px;color:#000;transform:scaleX(0.917);transform-origin:left center;">2,2</div>
<div style="left:210px;top:352.03px;font-size:12px;line-height:12px;color:#000;transform:scaleX(0.917);transform-origin:left center;">05.1.05.04</div>
<svg style="left:271px;top:364px;" width="8" height="14" viewBox="0 0 8 14"><path d="M1.6 10.5 V2.2 Q1.6 1.2 2.8 1.2 H4.4 Q5.4 1.2 5.4 2.2 V5" fill="none" stroke="#555" stroke-width="1.1"/><path d="M2.6 5 V11 Q2.6 12.6 4.3 12.6 Q6.4 12.6 6.4 11 V5" fill="none" stroke="#404040" stroke-width="1.5"/></svg>
<div style="left:286.5px;top:352.03px;font-size:12px;line-height:12px;color:#000;transform:scaleX(0.917);transform-origin:left center;">Конструкции сборные железобетонные</div>
<div style="left:517.5px;top:352.03px;font-size:12px;line-height:12px;color:#000;transform:scaleX(0.917);transform-origin:left center;">ШТ</div>
<div style="left:584px;top:352.03px;font-size:12px;line-height:12px;color:#000;transform:scaleX(0.917);transform-origin:left center;">3</div>
<div style="left:665px;top:352.03px;font-size:12px;line-height:12px;color:#000;transform:scaleX(0.917);transform-origin:left center;">100</div>
<div style="left:595.5px;width:400px;text-align:center;top:352.03px;font-size:12px;line-height:12px;color:#000;transform:scaleX(0.917);transform-origin:center center;">-</div>
<div style="left:529px;width:400px;text-align:right;top:352.03px;font-size:12px;line-height:12px;color:#000;transform:scaleX(0.917);transform-origin:right center;">0</div>
<div style="left:595px;width:400px;text-align:right;top:352.03px;font-size:12px;line-height:12px;color:#000;transform:scaleX(0.917);transform-origin:right center;">0</div>
<div style="left:661px;width:400px;text-align:right;top:352.03px;font-size:12px;line-height:12px;color:#000;transform:scaleX(0.917);transform-origin:right center;">0</div>
<div style="left:727px;width:400px;text-align:right;top:352.03px;font-size:12px;line-height:12px;color:#000;transform:scaleX(0.917);transform-origin:right center;">0</div>
<div style="left:793px;width:400px;text-align:right;top:352.03px;font-size:12px;line-height:12px;color:#000;transform:scaleX(0.917);transform-origin:right center;">0</div>
<div style="left:859px;width:400px;text-align:right;top:352.03px;font-size:12px;line-height:12px;color:#000;transform:scaleX(0.917);transform-origin:right center;">0</div>
<div style="left:925px;width:400px;text-align:right;top:352.03px;font-size:12px;line-height:12px;color:#000;transform:scaleX(0.917);transform-origin:right center;">0</div>
<div style="left:991px;width:400px;text-align:right;top:352.03px;font-size:12px;line-height:12px;color:#000;transform:scaleX(0.917);transform-origin:right center;">0</div>
<div style="left:1057px;width:400px;text-align:right;top:352.03px;font-size:12px;line-height:12px;color:#000;transform:scaleX(0.917);transform-origin:right center;">0</div>
<div style="left:1123px;width:400px;text-align:right;top:352.03px;font-size:12px;line-height:12px;color:#000;transform:scaleX(0.917);transform-origin:right center;">0</div>
<div style="left:1212px;width:400px;text-align:right;top:352.03px;font-size:12px;line-height:12px;color:#000;transform:scaleX(0.917);transform-origin:right center;">0</div>
<div style="left:1293px;width:400px;text-align:right;top:352.03px;font-size:12px;line-height:12px;color:#000;transform:scaleX(0.917);transform-origin:right center;">0</div>
<svg style="left:5px;top:208px;" width="8" height="12" viewBox="0 0 8 12"><path d="M1 1 L7 6 L1 11 Z" fill="#000"/></svg>
<svg style="left:656px;top:290px;" width="7" height="7" viewBox="0 0 7 7"><path d="M0 0 H6 V6 Z" fill="#00b000"/></svg>
<div style="left:205px;top:227px;width:312px;height:61px;background:transparent;box-sizing:border-box;border:3px solid #ff0000;"></div>
<div style="left:205px;top:318px;width:312px;height:61px;background:transparent;box-sizing:border-box;border:3px solid #ff0000;"></div>
<div style="left:1733px;top:134px;width:1px;height:915px;background:#ffffff;"></div>
<div style="left:1734px;top:134px;width:16px;height:915px;background:#f0f0f0;"></div>
<div style="left:1734px;top:218px;width:15px;height:475px;background:#cdcdcd;"></div>
<svg style="left:1736px;top:138px;" width="11" height="9" viewBox="0 0 11 9"><path d="M2.5 7.5 L5.5 3 L8.5 7.5" fill="none" stroke="#555" stroke-width="2"/></svg>
<svg style="left:1736px;top:1036px;" width="11" height="9" viewBox="0 0 11 9"><path d="M2.5 1.5 L5.5 6 L8.5 1.5" fill="none" stroke="#555" stroke-width="2"/></svg>
<div style="left:3px;top:1049px;width:1747px;height:16px;background:#f0f0f0;"></div>
<div style="left:20px;top:1049px;width:17px;height:15px;background:#cdcdcd;"></div>
<svg style="left:7px;top:1051px;" width="9" height="11" viewBox="0 0 9 11"><path d="M6.5 2.5 L2 5.5 L6.5 8.5" fill="none" stroke="#555" stroke-width="2"/></svg>
<svg style="left:1721px;top:1051px;" width="9" height="11" viewBox="0 0 9 11"><path d="M2 2.5 L6.5 5.5 L2 8.5" fill="none" stroke="#555" stroke-width="2"/></svg>
<div style="left:1750px;top:134px;width:1px;height:932px;background:#ffffff;"></div>
<div style="left:1px;top:1066px;width:1753px;height:1px;background:#6a6a6a;"></div>
<div style="left:1px;top:1067px;width:1754px;height:1px;background:#ffffff;"></div>
<div style="left:1px;top:1065px;width:72px;height:23px;background:#f0f0f0;box-sizing:border-box;border-left:1px solid #fff;border-right:1px solid #696969;border-bottom:1px solid #696969;box-shadow:inset -1px -1px 0 #a0a0a0;border-bottom-right-radius:2px;"></div>
<div style="left:7px;top:1072.53px;font-size:12px;line-height:12px;color:#000;transform:scaleX(0.917);transform-origin:left center;">Полный вид</div>
<div style="left:74px;top:1067px;width:106px;height:19px;background:#f0f0f0;box-sizing:border-box;border-top:1px solid #a0a0a0;border-left:1px solid #fff;border-right:1px solid #696969;border-bottom:1px solid #696969;box-shadow:inset -1px -1px 0 #a0a0a0;border-bottom-right-radius:2px;"></div>
<div style="left:79px;top:1071.03px;font-size:12px;line-height:12px;color:#000;transform:scaleX(0.917);transform-origin:left center;">Сокращенный вид</div>
<div style="left:182px;top:1067px;width:67px;height:19px;background:#f0f0f0;box-sizing:border-box;border-top:1px solid #a0a0a0;border-left:1px solid #fff;border-right:1px solid #696969;border-bottom:1px solid #696969;box-shadow:inset -1px -1px 0 #a0a0a0;border-bottom-right-radius:2px;"></div>
<div style="left:187px;top:1071.03px;font-size:12px;line-height:12px;color:#000;transform:scaleX(0.917);transform-origin:left center;">Вид строки</div>
<div style="left:251px;top:1067px;width:100px;height:19px;background:#f0f0f0;box-sizing:border-box;border-top:1px solid #a0a0a0;border-left:1px solid #fff;border-right:1px solid #696969;border-bottom:1px solid #696969;box-shadow:inset -1px -1px 0 #a0a0a0;border-bottom-right-radius:2px;"></div>
<div style="left:256px;top:1071.03px;font-size:12px;line-height:12px;color:#000;transform:scaleX(0.917);transform-origin:left center;">Объектная смета</div>
<div style="left:353px;top:1067px;width:86px;height:19px;background:#f0f0f0;box-sizing:border-box;border-top:1px solid #a0a0a0;border-left:1px solid #fff;border-right:1px solid #696969;border-bottom:1px solid #696969;box-shadow:inset -1px -1px 0 #a0a0a0;border-bottom-right-radius:2px;"></div>
<div style="left:358px;top:1071.03px;font-size:12px;line-height:12px;color:#000;transform:scaleX(0.917);transform-origin:left center;">Предпросмотр</div>
<div style="left:1px;top:1091px;width:85px;height:26px;background:transparent;box-sizing:border-box;border-top:1px solid #a0a0a0;border-left:1px solid #a0a0a0;border-right:1px solid #fff;border-bottom:1px solid #fff;"></div>
<div style="left:89px;top:1091px;width:297px;height:26px;background:transparent;box-sizing:border-box;border-top:1px solid #a0a0a0;border-left:1px solid #a0a0a0;border-right:1px solid #fff;border-bottom:1px solid #fff;"></div>
<div style="left:390px;top:1091px;width:1297px;height:26px;background:transparent;box-sizing:border-box;border-top:1px solid #a0a0a0;border-left:1px solid #a0a0a0;border-right:1px solid #fff;border-bottom:1px solid #fff;"></div>
<div style="left:1688px;top:1091px;width:32px;height:26px;background:transparent;box-sizing:border-box;border-top:1px solid #a0a0a0;border-left:1px solid #a0a0a0;border-right:1px solid #fff;border-bottom:1px solid #fff;"></div>
<div style="left:1722px;top:1091px;width:32px;height:26px;background:transparent;box-sizing:border-box;border-top:1px solid #a0a0a0;border-left:1px solid #a0a0a0;border-right:1px solid #fff;border-bottom:1px solid #fff;"></div>
<div style="left:395px;top:1098.03px;font-size:12px;line-height:12px;color:#000;transform:scaleX(0.954);transform-origin:left center;">ИТОГО (руб)  По ЛС: 11 367,9 / 40 064,78</div>
<div style="left:628px;top:1098.03px;font-size:12px;line-height:12px;color:#000;transform:scaleX(0.95);transform-origin:left center;">По объекту: 11 367,9 / 40 064,78</div>
<svg style="left:1694px;top:1095px;" width="18" height="18" viewBox="0 0 18 18"><circle cx="9" cy="9" r="7.5" fill="#9a9a9a"/><rect x="8" y="4" width="2" height="2" fill="#fff"/><rect x="8" y="7" width="2" height="6" fill="#fff"/><path d="M2 1.5 L15.5 15.5" stroke="#ff0000" stroke-width="1.6"/></svg>
<div style="left:1729.5px;top:1098.03px;font-size:12px;line-height:12px;color:#000;transform:scaleX(0.82);transform-origin:left center;">RU</div>
<div style="left:0px;top:0px;width:1757px;height:1px;background:#6e6e6e;"></div>
<div style="left:0px;top:0px;width:1px;height:1119px;background:#6e6e6e;"></div>
<div style="left:1753px;top:1px;width:1px;height:1066px;background:#8a8a8a;"></div>
<div style="left:1753px;top:1068px;width:1px;height:51px;background:#909090;"></div>
<div style="left:1754px;top:104px;width:1px;height:1015px;background:#6e6e6e;"></div>
<div style="left:1754px;top:0px;width:1px;height:104px;background:#f4f4f4;"></div>
<div style="left:1755px;top:152px;width:1px;height:967px;background:#606060;"></div>
<div style="left:1756px;top:0px;width:1px;height:1119px;background:#7a7a7a;"></div>
<div style="left:1755px;top:0px;width:1px;height:152px;background:#1e3a6a;"></div>
<div style="left:0px;top:1118px;width:1757px;height:1px;background:#6e6e6e;"></div>
</body></html>
